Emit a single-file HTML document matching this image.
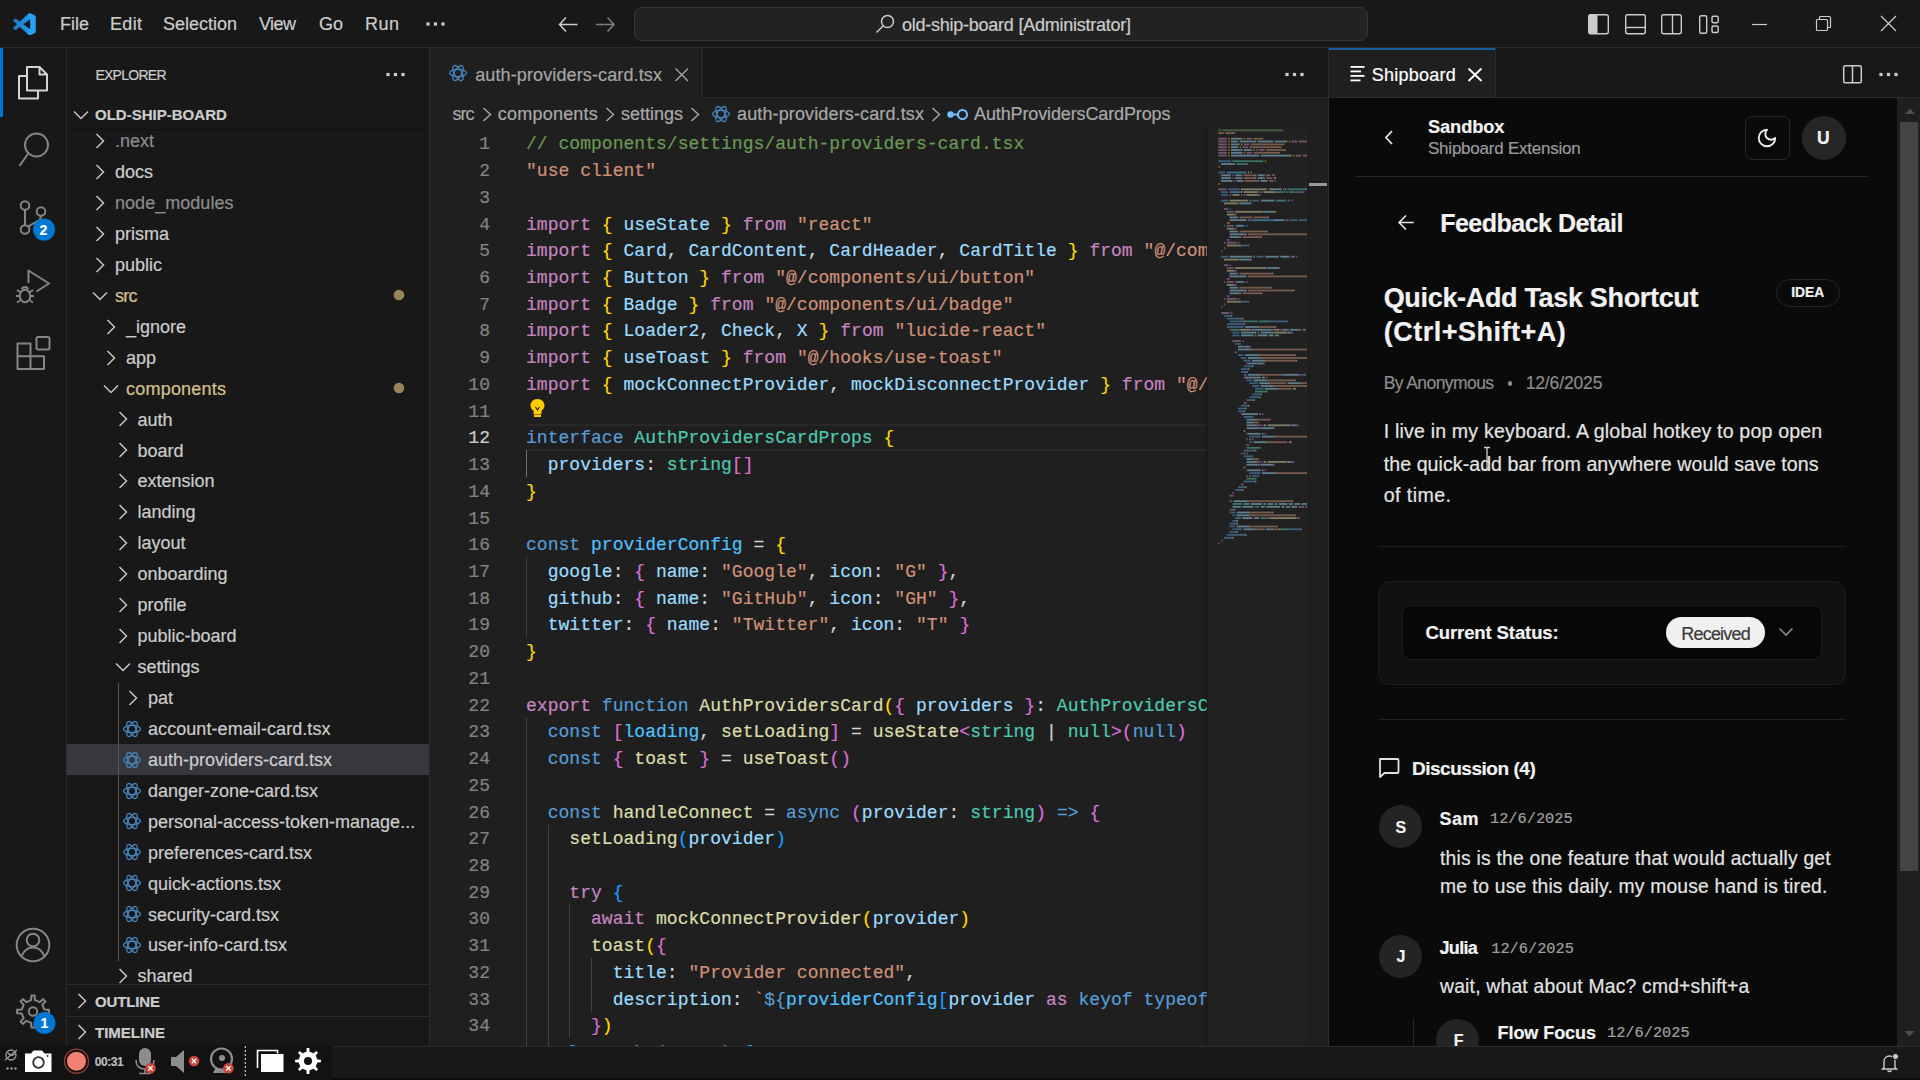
<!DOCTYPE html>
<html><head><meta charset="utf-8">
<style>
*{margin:0;padding:0;box-sizing:border-box}
html,body{width:1920px;height:1080px;overflow:hidden;background:#181818;font-family:"Liberation Sans",sans-serif;color:#cccccc;position:relative}
.a{position:absolute}
.t{position:absolute;white-space:pre;line-height:1;-webkit-text-stroke:0.2px currentColor}
</style></head><body>
<div class="a" style="left:0px;top:0px;width:1920px;height:48px;background:#181818;"></div>
<div class="a" style="left:0px;top:47px;width:1920px;height:1px;background:#2b2b2b;"></div>
<svg class="a" style="left:13px;top:12.5px" width="23" height="22.5" viewBox="0 0 24 24"><defs><linearGradient id="vg" x1="0" x2="1" y1="0" y2="0"><stop offset="0" stop-color="#1f78c6"/><stop offset="0.6" stop-color="#2090e0"/><stop offset="0.7" stop-color="#24a2f3"/></linearGradient></defs><path fill="url(#vg)" d="M23.15 2.587L18.21.21a1.494 1.494 0 0 0-1.705.29l-9.46 8.63-4.12-3.128a.999.999 0 0 0-1.276.057L.327 7.261A1 1 0 0 0 .326 8.74L3.899 12 .326 15.26a1 1 0 0 0 .001 1.479L1.65 17.94a.999.999 0 0 0 1.276.057l4.12-3.128 9.46 8.63a1.492 1.492 0 0 0 1.704.29l4.942-2.377A1.5 1.5 0 0 0 24 20.06V3.939a1.5 1.5 0 0 0-.85-1.352zm-5.146 14.861L10.826 12l7.178-5.448v10.896z"/></svg>
<div id="t1" class="t" style="left:60.00px;top:15.26px;font-size:18px;color:#cccccc;font-family:'Liberation Sans',sans-serif;letter-spacing:0.002px;">File</div>
<div id="t2" class="t" style="left:110.00px;top:15.26px;font-size:18px;color:#cccccc;font-family:'Liberation Sans',sans-serif;letter-spacing:0.328px;">Edit</div>
<div id="t3" class="t" style="left:163.00px;top:15.26px;font-size:18px;color:#cccccc;font-family:'Liberation Sans',sans-serif;letter-spacing:-0.005px;">Selection</div>
<div id="t4" class="t" style="left:259.00px;top:15.26px;font-size:18px;color:#cccccc;font-family:'Liberation Sans',sans-serif;letter-spacing:-0.563px;">View</div>
<div id="t5" class="t" style="left:319.00px;top:15.26px;font-size:18px;color:#cccccc;font-family:'Liberation Sans',sans-serif;letter-spacing:-0.001px;">Go</div>
<div id="t6" class="t" style="left:365.00px;top:15.26px;font-size:18px;color:#cccccc;font-family:'Liberation Sans',sans-serif;letter-spacing:0.495px;">Run</div>
<svg class="a" style="left:424px;top:20px" width="24" height="8"><rect x="2.4" y="2.4" width="3.2" height="3.2" fill="#ccc"/><rect x="9.9" y="2.4" width="3.2" height="3.2" fill="#ccc"/><rect x="17.4" y="2.4" width="3.2" height="3.2" fill="#ccc"/></svg>
<svg class="a" style="left:556px;top:14px" width="24" height="22" viewBox="0 0 24 22" fill="none" stroke="#cccccc" stroke-width="1.5"><path d="M3.5 10.5 H21.5 M10 3.5 L3.5 10.5 L10 17.5"/></svg>
<svg class="a" style="left:593px;top:14px" width="24" height="22" viewBox="0 0 24 22" fill="none" stroke="#7f7f7f" stroke-width="1.5"><path d="M3 10.5 H21 M14.5 3.5 L21 10.5 L14.5 17.5"/></svg>
<div class="a" style="left:634px;top:7px;width:734px;height:34px;border:1px solid #383838;border-radius:8px;background:#222222"></div>
<svg class="a" style="left:874px;top:13px" width="22" height="22" viewBox="0 0 22 22" fill="none" stroke="#cccccc" stroke-width="1.5"><circle cx="13.5" cy="8.5" r="6"/><path d="M9.2 12.8 L2.5 19.5"/></svg>
<div id="t7" class="t" style="left:902.00px;top:15.56px;font-size:18px;color:#cccccc;font-family:'Liberation Sans',sans-serif;letter-spacing:-0.245px;">old-ship-board [Administrator]</div>
<svg class="a" style="left:1586px;top:12px" width="140" height="24" viewBox="0 0 140 24" fill="none" stroke="#cccccc" stroke-width="1.4">
<rect x="2.7" y="2.7" width="19.6" height="19" rx="2"/><rect x="3" y="3" width="8.5" height="18.5" fill="#cccccc" stroke="none"/>
<rect x="39.7" y="2.7" width="19.6" height="19" rx="2"/><path d="M40 15.5 H59"/>
<rect x="75.7" y="2.7" width="19.6" height="19" rx="2"/><path d="M86.5 3 V21.5"/>
<rect x="113.7" y="3.7" width="7" height="17.5" rx="1.5"/><rect x="126" y="4.2" width="6.2" height="6.5" rx="1.5"/><rect x="126" y="14" width="6.2" height="6.5" rx="1.5"/>
</svg>
<svg class="a" style="left:1750px;top:14px" width="160" height="22" viewBox="0 0 160 22" fill="none" stroke="#cccccc" stroke-width="1.2">
<path d="M2 10.5 H17"/>
<rect x="66.5" y="5.5" width="11" height="11" rx="1"/><path d="M69.5 5.5 V3.5 Q69.5 2.5 70.5 2.5 H79.5 Q80.5 2.5 80.5 3.5 V12.5 Q80.5 13.5 79.5 13.5 H77.5"/>
<path d="M131 2 L146 17 M146 2 L131 17"/>
</svg>
<div class="a" style="left:0px;top:48px;width:66px;height:998px;background:#181818;"></div>
<div class="a" style="left:66px;top:48px;width:1px;height:998px;background:#2b2b2b;"></div>
<div class="a" style="left:0px;top:48px;width:2.5px;height:69px;background:#0078d4;"></div>
<svg class="a" style="left:0;top:48px" width="66" height="998" viewBox="0 48 66 998" fill="none" stroke-width="2" stroke-linejoin="round">
<g stroke="#d4d4d4">
<path d="M27 67 H39.5 L47 74.5 V90.5 H27 Z M39.5 67 V74.5 H47"/>
<path d="M27 76 H19 V98.5 H38 V90.5"/>
</g>
<g stroke="#858585">
<circle cx="36.5" cy="145" r="11.5"/><path d="M28.3 153.2 L19.5 166"/>
<circle cx="25" cy="205.5" r="4.3"/><circle cx="41" cy="211.5" r="4.3"/><circle cx="25" cy="229.5" r="4.3"/>
<path d="M25 209.8 V225.2 M41 215.8 C41 222 34 222 28.6 226.5"/>
<path d="M28.5 283 V270.5 L49 283.5 L36.5 291.5"/>
<ellipse cx="25" cy="296" rx="5.3" ry="6.3"/><path d="M17 290 L20 292 M33 290 L30 292 M16 296 H19.5 M34 296 H30.5 M17 302.5 L20 300.5 M33 302.5 L30 300.5 M21.5 289 Q25 285 28.5 289"/>
<path d="M17.5 343.5 H30.5 V369 H17.5 Z M17.5 356.2 H44 V369 H30.5"/>
<rect x="36.5" y="337" width="13" height="12.5" rx="1.5"/>
<circle cx="33" cy="945" r="16.3"/><circle cx="33" cy="940" r="6.3"/><path d="M21.5 956.5 C24 950 28 947.5 33 947.5 C38 947.5 42 950 44.5 956.5"/>
<path d="M44.34 1009.61 L48.92 1009.87 L48.92 1013.13 L44.34 1013.39 L42.36 1018.19 L45.41 1021.60 L43.10 1023.91 L39.69 1020.86 L34.89 1022.84 L34.63 1027.42 L31.37 1027.42 L31.11 1022.84 L26.31 1020.86 L22.90 1023.91 L20.59 1021.60 L23.64 1018.19 L21.66 1013.39 L17.08 1013.13 L17.08 1009.87 L21.66 1009.61 L23.64 1004.81 L20.59 1001.40 L22.90 999.09 L26.31 1002.14 L31.11 1000.16 L31.37 995.58 L34.63 995.58 L34.89 1000.16 L39.69 1002.14 L43.10 999.09 L45.41 1001.40 L42.36 1004.81 Z"/><circle cx="33" cy="1011.5" r="4.2"/>
</g>
<circle cx="44" cy="229.6" r="11" fill="#0078d4"/>
<circle cx="44.5" cy="1023" r="11" fill="#0078d4"/>
</svg>
<div id="t8" class="t" style="left:39.50px;top:222.95px;font-size:14px;color:#ffffff;font-weight:700;font-family:'Liberation Sans',sans-serif;">2</div>
<div id="t9" class="t" style="left:40.50px;top:1016.35px;font-size:14px;color:#ffffff;font-weight:700;font-family:'Liberation Sans',sans-serif;">1</div>
<div class="a" style="left:67px;top:48px;width:362px;height:998px;background:#181818;"></div>
<div class="a" style="left:429px;top:48px;width:1px;height:998px;background:#2b2b2b;"></div>
<div id="t10" class="t" style="left:95.40px;top:68.15px;font-size:14px;color:#cccccc;font-family:'Liberation Sans',sans-serif;letter-spacing:-0.734px;">EXPLORER</div>
<svg class="a" style="left:384px;top:70px" width="24" height="9"><rect x="2.4" y="2.9" width="3.2" height="3.2" fill="#ccc"/><rect x="9.9" y="2.9" width="3.2" height="3.2" fill="#ccc"/><rect x="17.4" y="2.9" width="3.2" height="3.2" fill="#ccc"/></svg>
<svg class="a" style="left:72.3px;top:105.5px" width="18" height="18" viewBox="0 0 18 18" fill="none" stroke="#c5c5c5" stroke-width="1.5"><path d="M2 5.5 L9 12.5 L16 5.5"/></svg>
<div id="t11" class="t" style="left:95.00px;top:106.50px;font-size:15px;color:#cccccc;font-weight:700;font-family:'Liberation Sans',sans-serif;letter-spacing:0.013px;">OLD-SHIP-BOARD</div>
<div class="a" style="left:67px;top:129px;width:362px;height:2px;background:linear-gradient(#0d0d0d,#181818);"></div>
<div class="a" style="left:67px;top:744px;width:362px;height:31px;background:#37373d;"></div>
<div class="a" style="left:118px;top:683px;width:1px;height:278px;background:#585858;"></div>
<div class="a" style="left:67px;top:131px;width:362px;height:853px;overflow:hidden">
<svg class="a" style="left:24px;top:1.0px" width="18" height="18" viewBox="0 0 18 18" fill="none" stroke="#c5c5c5" stroke-width="1.5"><path d="M5.5 2 L12.5 9 L5.5 16"/></svg>
<div id="t12" class="t" style="left:48.00px;top:1.26px;font-size:18px;color:#8c8c8c;font-family:'Liberation Sans',sans-serif;letter-spacing:-0.006px;">.next</div>
<svg class="a" style="left:24px;top:31.930000000000007px" width="18" height="18" viewBox="0 0 18 18" fill="none" stroke="#c5c5c5" stroke-width="1.5"><path d="M5.5 2 L12.5 9 L5.5 16"/></svg>
<div id="t13" class="t" style="left:48.00px;top:32.19px;font-size:18px;color:#cccccc;font-family:'Liberation Sans',sans-serif;">docs</div>
<svg class="a" style="left:24px;top:62.860000000000014px" width="18" height="18" viewBox="0 0 18 18" fill="none" stroke="#c5c5c5" stroke-width="1.5"><path d="M5.5 2 L12.5 9 L5.5 16"/></svg>
<div id="t14" class="t" style="left:48.00px;top:63.12px;font-size:18px;color:#8c8c8c;font-family:'Liberation Sans',sans-serif;letter-spacing:0.037px;">node_modules</div>
<svg class="a" style="left:24px;top:93.78999999999999px" width="18" height="18" viewBox="0 0 18 18" fill="none" stroke="#c5c5c5" stroke-width="1.5"><path d="M5.5 2 L12.5 9 L5.5 16"/></svg>
<div id="t15" class="t" style="left:48.00px;top:94.05px;font-size:18px;color:#cccccc;font-family:'Liberation Sans',sans-serif;">prisma</div>
<svg class="a" style="left:24px;top:124.72000000000003px" width="18" height="18" viewBox="0 0 18 18" fill="none" stroke="#c5c5c5" stroke-width="1.5"><path d="M5.5 2 L12.5 9 L5.5 16"/></svg>
<div id="t16" class="t" style="left:48.00px;top:124.98px;font-size:18px;color:#cccccc;font-family:'Liberation Sans',sans-serif;">public</div>
<svg class="a" style="left:24px;top:156.14999999999998px" width="18" height="18" viewBox="0 0 18 18" fill="none" stroke="#c5c5c5" stroke-width="1.5"><path d="M2 5.5 L9 12.5 L16 5.5"/></svg>
<div id="t17" class="t" style="left:48.00px;top:155.91px;font-size:18px;color:#d9c08c;font-family:'Liberation Sans',sans-serif;letter-spacing:-0.747px;">src</div>
<svg class="a" style="left:35px;top:186.57999999999998px" width="18" height="18" viewBox="0 0 18 18" fill="none" stroke="#c5c5c5" stroke-width="1.5"><path d="M5.5 2 L12.5 9 L5.5 16"/></svg>
<div id="t18" class="t" style="left:59.00px;top:186.84px;font-size:18px;color:#cccccc;font-family:'Liberation Sans',sans-serif;">_ignore</div>
<svg class="a" style="left:35px;top:217.51px" width="18" height="18" viewBox="0 0 18 18" fill="none" stroke="#c5c5c5" stroke-width="1.5"><path d="M5.5 2 L12.5 9 L5.5 16"/></svg>
<div id="t19" class="t" style="left:59.00px;top:217.77px;font-size:18px;color:#cccccc;font-family:'Liberation Sans',sans-serif;">app</div>
<svg class="a" style="left:35px;top:248.94px" width="18" height="18" viewBox="0 0 18 18" fill="none" stroke="#c5c5c5" stroke-width="1.5"><path d="M2 5.5 L9 12.5 L16 5.5"/></svg>
<div id="t20" class="t" style="left:59.00px;top:248.70px;font-size:18px;color:#d9c08c;font-family:'Liberation Sans',sans-serif;letter-spacing:0.216px;">components</div>
<svg class="a" style="left:46.5px;top:279.37px" width="18" height="18" viewBox="0 0 18 18" fill="none" stroke="#c5c5c5" stroke-width="1.5"><path d="M5.5 2 L12.5 9 L5.5 16"/></svg>
<div id="t21" class="t" style="left:70.50px;top:279.63px;font-size:18px;color:#cccccc;font-family:'Liberation Sans',sans-serif;">auth</div>
<svg class="a" style="left:46.5px;top:310.3px" width="18" height="18" viewBox="0 0 18 18" fill="none" stroke="#c5c5c5" stroke-width="1.5"><path d="M5.5 2 L12.5 9 L5.5 16"/></svg>
<div id="t22" class="t" style="left:70.50px;top:310.56px;font-size:18px;color:#cccccc;font-family:'Liberation Sans',sans-serif;">board</div>
<svg class="a" style="left:46.5px;top:341.23px" width="18" height="18" viewBox="0 0 18 18" fill="none" stroke="#c5c5c5" stroke-width="1.5"><path d="M5.5 2 L12.5 9 L5.5 16"/></svg>
<div id="t23" class="t" style="left:70.50px;top:341.49px;font-size:18px;color:#cccccc;font-family:'Liberation Sans',sans-serif;">extension</div>
<svg class="a" style="left:46.5px;top:372.15999999999997px" width="18" height="18" viewBox="0 0 18 18" fill="none" stroke="#c5c5c5" stroke-width="1.5"><path d="M5.5 2 L12.5 9 L5.5 16"/></svg>
<div id="t24" class="t" style="left:70.50px;top:372.42px;font-size:18px;color:#cccccc;font-family:'Liberation Sans',sans-serif;">landing</div>
<svg class="a" style="left:46.5px;top:403.0899999999999px" width="18" height="18" viewBox="0 0 18 18" fill="none" stroke="#c5c5c5" stroke-width="1.5"><path d="M5.5 2 L12.5 9 L5.5 16"/></svg>
<div id="t25" class="t" style="left:70.50px;top:403.35px;font-size:18px;color:#cccccc;font-family:'Liberation Sans',sans-serif;">layout</div>
<svg class="a" style="left:46.5px;top:434.02px" width="18" height="18" viewBox="0 0 18 18" fill="none" stroke="#c5c5c5" stroke-width="1.5"><path d="M5.5 2 L12.5 9 L5.5 16"/></svg>
<div id="t26" class="t" style="left:70.50px;top:434.28px;font-size:18px;color:#cccccc;font-family:'Liberation Sans',sans-serif;">onboarding</div>
<svg class="a" style="left:46.5px;top:464.95000000000005px" width="18" height="18" viewBox="0 0 18 18" fill="none" stroke="#c5c5c5" stroke-width="1.5"><path d="M5.5 2 L12.5 9 L5.5 16"/></svg>
<div id="t27" class="t" style="left:70.50px;top:465.21px;font-size:18px;color:#cccccc;font-family:'Liberation Sans',sans-serif;">profile</div>
<svg class="a" style="left:46.5px;top:495.88px" width="18" height="18" viewBox="0 0 18 18" fill="none" stroke="#c5c5c5" stroke-width="1.5"><path d="M5.5 2 L12.5 9 L5.5 16"/></svg>
<div id="t28" class="t" style="left:70.50px;top:496.14px;font-size:18px;color:#cccccc;font-family:'Liberation Sans',sans-serif;">public-board</div>
<svg class="a" style="left:46.5px;top:527.31px" width="18" height="18" viewBox="0 0 18 18" fill="none" stroke="#c5c5c5" stroke-width="1.5"><path d="M2 5.5 L9 12.5 L16 5.5"/></svg>
<div id="t29" class="t" style="left:70.50px;top:527.07px;font-size:18px;color:#cccccc;font-family:'Liberation Sans',sans-serif;">settings</div>
<svg class="a" style="left:57px;top:557.74px" width="18" height="18" viewBox="0 0 18 18" fill="none" stroke="#c5c5c5" stroke-width="1.5"><path d="M5.5 2 L12.5 9 L5.5 16"/></svg>
<div id="t30" class="t" style="left:81.00px;top:558.00px;font-size:18px;color:#cccccc;font-family:'Liberation Sans',sans-serif;">pat</div>
<svg class="a" style="left:55px;top:587.67px" width="20" height="20" viewBox="-10 -10 20 20" fill="none" stroke="#4383ba" stroke-width="1.3"><g transform="scale(1.0)"><ellipse rx="8.4" ry="3.7"/><ellipse rx="8.4" ry="3.7" transform="rotate(60)"/><ellipse rx="8.4" ry="3.7" transform="rotate(120)"/></g></svg>
<div id="t31" class="t" style="left:81.00px;top:588.93px;font-size:18px;color:#cccccc;font-family:'Liberation Sans',sans-serif;letter-spacing:0.068px;">account-email-card.tsx</div>
<svg class="a" style="left:55px;top:618.6px" width="20" height="20" viewBox="-10 -10 20 20" fill="none" stroke="#4383ba" stroke-width="1.3"><g transform="scale(1.0)"><ellipse rx="8.4" ry="3.7"/><ellipse rx="8.4" ry="3.7" transform="rotate(60)"/><ellipse rx="8.4" ry="3.7" transform="rotate(120)"/></g></svg>
<div id="t32" class="t" style="left:81.00px;top:619.86px;font-size:18px;color:#cccccc;font-family:'Liberation Sans',sans-serif;">auth-providers-card.tsx</div>
<svg class="a" style="left:55px;top:649.53px" width="20" height="20" viewBox="-10 -10 20 20" fill="none" stroke="#4383ba" stroke-width="1.3"><g transform="scale(1.0)"><ellipse rx="8.4" ry="3.7"/><ellipse rx="8.4" ry="3.7" transform="rotate(60)"/><ellipse rx="8.4" ry="3.7" transform="rotate(120)"/></g></svg>
<div id="t33" class="t" style="left:81.00px;top:650.79px;font-size:18px;color:#cccccc;font-family:'Liberation Sans',sans-serif;">danger-zone-card.tsx</div>
<svg class="a" style="left:55px;top:680.46px" width="20" height="20" viewBox="-10 -10 20 20" fill="none" stroke="#4383ba" stroke-width="1.3"><g transform="scale(1.0)"><ellipse rx="8.4" ry="3.7"/><ellipse rx="8.4" ry="3.7" transform="rotate(60)"/><ellipse rx="8.4" ry="3.7" transform="rotate(120)"/></g></svg>
<div id="t34" class="t" style="left:81.00px;top:681.72px;font-size:18px;color:#cccccc;font-family:'Liberation Sans',sans-serif;">personal-access-token-manage...</div>
<svg class="a" style="left:55px;top:711.39px" width="20" height="20" viewBox="-10 -10 20 20" fill="none" stroke="#4383ba" stroke-width="1.3"><g transform="scale(1.0)"><ellipse rx="8.4" ry="3.7"/><ellipse rx="8.4" ry="3.7" transform="rotate(60)"/><ellipse rx="8.4" ry="3.7" transform="rotate(120)"/></g></svg>
<div id="t35" class="t" style="left:81.00px;top:712.65px;font-size:18px;color:#cccccc;font-family:'Liberation Sans',sans-serif;">preferences-card.tsx</div>
<svg class="a" style="left:55px;top:742.3199999999999px" width="20" height="20" viewBox="-10 -10 20 20" fill="none" stroke="#4383ba" stroke-width="1.3"><g transform="scale(1.0)"><ellipse rx="8.4" ry="3.7"/><ellipse rx="8.4" ry="3.7" transform="rotate(60)"/><ellipse rx="8.4" ry="3.7" transform="rotate(120)"/></g></svg>
<div id="t36" class="t" style="left:81.00px;top:743.58px;font-size:18px;color:#cccccc;font-family:'Liberation Sans',sans-serif;">quick-actions.tsx</div>
<svg class="a" style="left:55px;top:773.25px" width="20" height="20" viewBox="-10 -10 20 20" fill="none" stroke="#4383ba" stroke-width="1.3"><g transform="scale(1.0)"><ellipse rx="8.4" ry="3.7"/><ellipse rx="8.4" ry="3.7" transform="rotate(60)"/><ellipse rx="8.4" ry="3.7" transform="rotate(120)"/></g></svg>
<div id="t37" class="t" style="left:81.00px;top:774.51px;font-size:18px;color:#cccccc;font-family:'Liberation Sans',sans-serif;">security-card.tsx</div>
<svg class="a" style="left:55px;top:804.18px" width="20" height="20" viewBox="-10 -10 20 20" fill="none" stroke="#4383ba" stroke-width="1.3"><g transform="scale(1.0)"><ellipse rx="8.4" ry="3.7"/><ellipse rx="8.4" ry="3.7" transform="rotate(60)"/><ellipse rx="8.4" ry="3.7" transform="rotate(120)"/></g></svg>
<div id="t38" class="t" style="left:81.00px;top:805.44px;font-size:18px;color:#cccccc;font-family:'Liberation Sans',sans-serif;">user-info-card.tsx</div>
<svg class="a" style="left:46.5px;top:836.11px" width="18" height="18" viewBox="0 0 18 18" fill="none" stroke="#c5c5c5" stroke-width="1.5"><path d="M5.5 2 L12.5 9 L5.5 16"/></svg>
<div id="t39" class="t" style="left:70.50px;top:836.37px;font-size:18px;color:#cccccc;font-family:'Liberation Sans',sans-serif;">shared</div>
</div>
<svg class="a" style="left:390px;top:285px" width="20" height="115"><circle cx="9" cy="10" r="5.3" fill="#968559"/><circle cx="9" cy="103" r="5.3" fill="#968559"/></svg>
<div class="a" style="left:67px;top:984px;width:362px;height:1px;background:#2b2b2b;"></div>
<svg class="a" style="left:72.5px;top:992px" width="18" height="18" viewBox="0 0 18 18" fill="none" stroke="#c5c5c5" stroke-width="1.5"><path d="M5.5 2 L12.5 9 L5.5 16"/></svg>
<div id="t40" class="t" style="left:95.00px;top:994.10px;font-size:15px;color:#cccccc;font-weight:700;font-family:'Liberation Sans',sans-serif;letter-spacing:-0.138px;">OUTLINE</div>
<div class="a" style="left:67px;top:1016px;width:362px;height:1px;background:#2b2b2b;"></div>
<svg class="a" style="left:72.5px;top:1023px" width="18" height="18" viewBox="0 0 18 18" fill="none" stroke="#c5c5c5" stroke-width="1.5"><path d="M5.5 2 L12.5 9 L5.5 16"/></svg>
<div id="t41" class="t" style="left:95.00px;top:1024.90px;font-size:15px;color:#cccccc;font-weight:700;font-family:'Liberation Sans',sans-serif;letter-spacing:0.001px;">TIMELINE</div>
<div class="a" style="left:430px;top:98px;width:898px;height:948px;background:#1f1f1f;"></div>
<div class="a" style="left:430px;top:48px;width:898px;height:50px;background:#181818;"></div>
<div class="a" style="left:430px;top:97px;width:898px;height:1px;background:#2b2b2b;"></div>
<div class="a" style="left:430px;top:48px;width:272px;height:50px;background:#1f1f1f;"></div>
<div class="a" style="left:702px;top:48px;width:1px;height:49px;background:#2b2b2b;"></div>
<svg class="a" style="left:447.8px;top:62.8px" width="20" height="20" viewBox="-10 -10 20 20" fill="none" stroke="#4383ba" stroke-width="1.3"><ellipse rx="8.4" ry="3.7"/><ellipse rx="8.4" ry="3.7" transform="rotate(60)"/><ellipse rx="8.4" ry="3.7" transform="rotate(120)"/></svg>
<div id="t42" class="t" style="left:475.20px;top:65.56px;font-size:18px;color:#a6a6a6;font-family:'Liberation Sans',sans-serif;letter-spacing:0.120px;">auth-providers-card.tsx</div>
<svg class="a" style="left:672px;top:65px" width="20" height="20" viewBox="0 0 20 20" fill="none" stroke="#a6a6a6" stroke-width="1.4"><path d="M3.5 3.5 L16 16 M16 3.5 L3.5 16"/></svg>
<svg class="a" style="left:1283px;top:70px" width="24" height="9"><rect x="2.4" y="2.9" width="3.2" height="3.2" fill="#ccc"/><rect x="9.9" y="2.9" width="3.2" height="3.2" fill="#ccc"/><rect x="17.4" y="2.9" width="3.2" height="3.2" fill="#ccc"/></svg>
<div id="t43" class="t" style="left:452.60px;top:104.96px;font-size:18px;color:#a9a9a9;font-family:'Liberation Sans',sans-serif;letter-spacing:-0.997px;">src</div>
<svg class="a" style="left:480.5px;top:104px" width="13" height="20" viewBox="0 0 13 20" fill="none" stroke="#a9a9a9" stroke-width="1.4"><path d="M2.5 4 L9.5 10.5 L2.5 17"/></svg>
<div id="t44" class="t" style="left:497.80px;top:104.96px;font-size:18px;color:#a9a9a9;font-family:'Liberation Sans',sans-serif;letter-spacing:0.216px;">components</div>
<svg class="a" style="left:604px;top:104px" width="13" height="20" viewBox="0 0 13 20" fill="none" stroke="#a9a9a9" stroke-width="1.4"><path d="M2.5 4 L9.5 10.5 L2.5 17"/></svg>
<div id="t45" class="t" style="left:621.00px;top:104.96px;font-size:18px;color:#a9a9a9;font-family:'Liberation Sans',sans-serif;letter-spacing:-0.005px;">settings</div>
<svg class="a" style="left:689px;top:104px" width="13" height="20" viewBox="0 0 13 20" fill="none" stroke="#a9a9a9" stroke-width="1.4"><path d="M2.5 4 L9.5 10.5 L2.5 17"/></svg>
<svg class="a" style="left:710.5px;top:103.5px" width="20" height="20" viewBox="-10 -10 20 20" fill="none" stroke="#4383ba" stroke-width="1.3"><ellipse rx="8.4" ry="3.7"/><ellipse rx="8.4" ry="3.7" transform="rotate(60)"/><ellipse rx="8.4" ry="3.7" transform="rotate(120)"/></svg>
<div id="t46" class="t" style="left:737.00px;top:104.96px;font-size:18px;color:#a9a9a9;font-family:'Liberation Sans',sans-serif;letter-spacing:0.133px;">auth-providers-card.tsx</div>
<svg class="a" style="left:930px;top:104px" width="13" height="20" viewBox="0 0 13 20" fill="none" stroke="#a9a9a9" stroke-width="1.4"><path d="M2.5 4 L9.5 10.5 L2.5 17"/></svg>
<svg class="a" style="left:946px;top:104px" width="24" height="20" viewBox="0 0 24 20" fill="none" stroke="#75beff" stroke-width="2"><circle cx="4.5" cy="10.5" r="2.2" fill="#75beff"/><path d="M6 10.5 H12"/><circle cx="16.5" cy="10.5" r="4.5"/></svg>
<div id="t47" class="t" style="left:974.00px;top:104.96px;font-size:18px;color:#a9a9a9;font-family:'Liberation Sans',sans-serif;letter-spacing:-0.123px;">AuthProvidersCardProps</div>
<div class="a" style="left:526px;top:424px;width:681px;height:1.5px;background:#282828;"></div>
<div class="a" style="left:526px;top:449px;width:681px;height:1.5px;background:#282828;"></div>
<div class="a" style="left:526.0px;top:450.4px;width:1px;height:26.7px;background:#707070;"></div>
<div class="a" style="left:526.0px;top:557.3px;width:1px;height:80.2px;background:#404040;"></div>
<div class="a" style="left:526.0px;top:717.7px;width:1px;height:347.5px;background:#404040;"></div>
<div class="a" style="left:547.7px;top:824.6px;width:1px;height:240.5px;background:#404040;"></div>
<div class="a" style="left:569.3px;top:904.8px;width:1px;height:133.6px;background:#404040;"></div>
<div class="a" style="left:591.0px;top:958.2px;width:1px;height:53.4px;background:#404040;"></div>
<div class="a" style="left:430px;top:129px;width:777px;height:917px;overflow:hidden">
<div id="t48" class="t" style="left:49.17px;top:6.31px;font-size:18px;color:#838383;font-family:'Liberation Mono',monospace;letter-spacing:0.03px;">1</div>
<div id="t49" class="t" style="left:49.17px;top:33.04px;font-size:18px;color:#838383;font-family:'Liberation Mono',monospace;letter-spacing:0.03px;">2</div>
<div id="t50" class="t" style="left:49.17px;top:59.77px;font-size:18px;color:#838383;font-family:'Liberation Mono',monospace;letter-spacing:0.03px;">3</div>
<div id="t51" class="t" style="left:49.17px;top:86.50px;font-size:18px;color:#838383;font-family:'Liberation Mono',monospace;letter-spacing:0.03px;">4</div>
<div id="t52" class="t" style="left:49.17px;top:113.23px;font-size:18px;color:#838383;font-family:'Liberation Mono',monospace;letter-spacing:0.03px;">5</div>
<div id="t53" class="t" style="left:49.17px;top:139.96px;font-size:18px;color:#838383;font-family:'Liberation Mono',monospace;letter-spacing:0.03px;">6</div>
<div id="t54" class="t" style="left:49.17px;top:166.69px;font-size:18px;color:#838383;font-family:'Liberation Mono',monospace;letter-spacing:0.03px;">7</div>
<div id="t55" class="t" style="left:49.17px;top:193.42px;font-size:18px;color:#838383;font-family:'Liberation Mono',monospace;letter-spacing:0.03px;">8</div>
<div id="t56" class="t" style="left:49.17px;top:220.15px;font-size:18px;color:#838383;font-family:'Liberation Mono',monospace;letter-spacing:0.03px;">9</div>
<div id="t57" class="t" style="left:38.34px;top:246.88px;font-size:18px;color:#838383;font-family:'Liberation Mono',monospace;letter-spacing:0.03px;">10</div>
<div id="t58" class="t" style="left:38.34px;top:273.61px;font-size:18px;color:#838383;font-family:'Liberation Mono',monospace;letter-spacing:0.03px;">11</div>
<div id="t59" class="t" style="left:38.34px;top:300.34px;font-size:18px;color:#cccccc;font-family:'Liberation Mono',monospace;letter-spacing:0.03px;">12</div>
<div id="t60" class="t" style="left:38.34px;top:327.07px;font-size:18px;color:#838383;font-family:'Liberation Mono',monospace;letter-spacing:0.03px;">13</div>
<div id="t61" class="t" style="left:38.34px;top:353.80px;font-size:18px;color:#838383;font-family:'Liberation Mono',monospace;letter-spacing:0.03px;">14</div>
<div id="t62" class="t" style="left:38.34px;top:380.53px;font-size:18px;color:#838383;font-family:'Liberation Mono',monospace;letter-spacing:0.03px;">15</div>
<div id="t63" class="t" style="left:38.34px;top:407.26px;font-size:18px;color:#838383;font-family:'Liberation Mono',monospace;letter-spacing:0.03px;">16</div>
<div id="t64" class="t" style="left:38.34px;top:433.99px;font-size:18px;color:#838383;font-family:'Liberation Mono',monospace;letter-spacing:0.03px;">17</div>
<div id="t65" class="t" style="left:38.34px;top:460.72px;font-size:18px;color:#838383;font-family:'Liberation Mono',monospace;letter-spacing:0.03px;">18</div>
<div id="t66" class="t" style="left:38.34px;top:487.45px;font-size:18px;color:#838383;font-family:'Liberation Mono',monospace;letter-spacing:0.03px;">19</div>
<div id="t67" class="t" style="left:38.34px;top:514.18px;font-size:18px;color:#838383;font-family:'Liberation Mono',monospace;letter-spacing:0.03px;">20</div>
<div id="t68" class="t" style="left:38.34px;top:540.91px;font-size:18px;color:#838383;font-family:'Liberation Mono',monospace;letter-spacing:0.03px;">21</div>
<div id="t69" class="t" style="left:38.34px;top:567.64px;font-size:18px;color:#838383;font-family:'Liberation Mono',monospace;letter-spacing:0.03px;">22</div>
<div id="t70" class="t" style="left:38.34px;top:594.37px;font-size:18px;color:#838383;font-family:'Liberation Mono',monospace;letter-spacing:0.03px;">23</div>
<div id="t71" class="t" style="left:38.34px;top:621.10px;font-size:18px;color:#838383;font-family:'Liberation Mono',monospace;letter-spacing:0.03px;">24</div>
<div id="t72" class="t" style="left:38.34px;top:647.83px;font-size:18px;color:#838383;font-family:'Liberation Mono',monospace;letter-spacing:0.03px;">25</div>
<div id="t73" class="t" style="left:38.34px;top:674.56px;font-size:18px;color:#838383;font-family:'Liberation Mono',monospace;letter-spacing:0.03px;">26</div>
<div id="t74" class="t" style="left:38.34px;top:701.29px;font-size:18px;color:#838383;font-family:'Liberation Mono',monospace;letter-spacing:0.03px;">27</div>
<div id="t75" class="t" style="left:38.34px;top:728.02px;font-size:18px;color:#838383;font-family:'Liberation Mono',monospace;letter-spacing:0.03px;">28</div>
<div id="t76" class="t" style="left:38.34px;top:754.75px;font-size:18px;color:#838383;font-family:'Liberation Mono',monospace;letter-spacing:0.03px;">29</div>
<div id="t77" class="t" style="left:38.34px;top:781.48px;font-size:18px;color:#838383;font-family:'Liberation Mono',monospace;letter-spacing:0.03px;">30</div>
<div id="t78" class="t" style="left:38.34px;top:808.21px;font-size:18px;color:#838383;font-family:'Liberation Mono',monospace;letter-spacing:0.03px;">31</div>
<div id="t79" class="t" style="left:38.34px;top:834.94px;font-size:18px;color:#838383;font-family:'Liberation Mono',monospace;letter-spacing:0.03px;">32</div>
<div id="t80" class="t" style="left:38.34px;top:861.67px;font-size:18px;color:#838383;font-family:'Liberation Mono',monospace;letter-spacing:0.03px;">33</div>
<div id="t81" class="t" style="left:38.34px;top:888.40px;font-size:18px;color:#838383;font-family:'Liberation Mono',monospace;letter-spacing:0.03px;">34</div>
<div id="t82" class="t" style="left:38.34px;top:915.13px;font-size:18px;color:#838383;font-family:'Liberation Mono',monospace;letter-spacing:0.03px;">35</div>
<div id="t83" class="t" style="left:96.00px;top:6.31px;font-size:18px;color:#d4d4d4;font-family:'Liberation Mono',monospace;letter-spacing:0.03px;"><span style="color:#6a9955">// components/settings/auth-providers-card.tsx</span></div>
<div id="t84" class="t" style="left:96.00px;top:33.04px;font-size:18px;color:#d4d4d4;font-family:'Liberation Mono',monospace;letter-spacing:0.03px;"><span style="color:#ce9178">"use client"</span></div>
<div id="t85" class="t" style="left:96.00px;top:86.50px;font-size:18px;color:#d4d4d4;font-family:'Liberation Mono',monospace;letter-spacing:0.03px;"><span style="color:#c586c0">import</span><span style="color:#d4d4d4"> </span><span style="color:#ffd700">{</span><span style="color:#9cdcfe"> useState </span><span style="color:#ffd700">}</span><span style="color:#d4d4d4"> </span><span style="color:#c586c0">from</span><span style="color:#d4d4d4"> </span><span style="color:#ce9178">"react"</span></div>
<div id="t86" class="t" style="left:96.00px;top:113.23px;font-size:18px;color:#d4d4d4;font-family:'Liberation Mono',monospace;letter-spacing:0.03px;"><span style="color:#c586c0">import</span><span style="color:#d4d4d4"> </span><span style="color:#ffd700">{</span><span style="color:#9cdcfe"> Card</span><span style="color:#d4d4d4">, </span><span style="color:#9cdcfe">CardContent</span><span style="color:#d4d4d4">, </span><span style="color:#9cdcfe">CardHeader</span><span style="color:#d4d4d4">, </span><span style="color:#9cdcfe">CardTitle </span><span style="color:#ffd700">}</span><span style="color:#d4d4d4"> </span><span style="color:#c586c0">from</span><span style="color:#d4d4d4"> </span><span style="color:#ce9178">"@/components/ui/card"</span></div>
<div id="t87" class="t" style="left:96.00px;top:139.96px;font-size:18px;color:#d4d4d4;font-family:'Liberation Mono',monospace;letter-spacing:0.03px;"><span style="color:#c586c0">import</span><span style="color:#d4d4d4"> </span><span style="color:#ffd700">{</span><span style="color:#9cdcfe"> Button </span><span style="color:#ffd700">}</span><span style="color:#d4d4d4"> </span><span style="color:#c586c0">from</span><span style="color:#d4d4d4"> </span><span style="color:#ce9178">"@/components/ui/button"</span></div>
<div id="t88" class="t" style="left:96.00px;top:166.69px;font-size:18px;color:#d4d4d4;font-family:'Liberation Mono',monospace;letter-spacing:0.03px;"><span style="color:#c586c0">import</span><span style="color:#d4d4d4"> </span><span style="color:#ffd700">{</span><span style="color:#9cdcfe"> Badge </span><span style="color:#ffd700">}</span><span style="color:#d4d4d4"> </span><span style="color:#c586c0">from</span><span style="color:#d4d4d4"> </span><span style="color:#ce9178">"@/components/ui/badge"</span></div>
<div id="t89" class="t" style="left:96.00px;top:193.42px;font-size:18px;color:#d4d4d4;font-family:'Liberation Mono',monospace;letter-spacing:0.03px;"><span style="color:#c586c0">import</span><span style="color:#d4d4d4"> </span><span style="color:#ffd700">{</span><span style="color:#9cdcfe"> Loader2</span><span style="color:#d4d4d4">, </span><span style="color:#9cdcfe">Check</span><span style="color:#d4d4d4">, </span><span style="color:#9cdcfe">X </span><span style="color:#ffd700">}</span><span style="color:#d4d4d4"> </span><span style="color:#c586c0">from</span><span style="color:#d4d4d4"> </span><span style="color:#ce9178">"lucide-react"</span></div>
<div id="t90" class="t" style="left:96.00px;top:220.15px;font-size:18px;color:#d4d4d4;font-family:'Liberation Mono',monospace;letter-spacing:0.03px;"><span style="color:#c586c0">import</span><span style="color:#d4d4d4"> </span><span style="color:#ffd700">{</span><span style="color:#9cdcfe"> useToast </span><span style="color:#ffd700">}</span><span style="color:#d4d4d4"> </span><span style="color:#c586c0">from</span><span style="color:#d4d4d4"> </span><span style="color:#ce9178">"@/hooks/use-toast"</span></div>
<div id="t91" class="t" style="left:96.00px;top:246.88px;font-size:18px;color:#d4d4d4;font-family:'Liberation Mono',monospace;letter-spacing:0.03px;"><span style="color:#c586c0">import</span><span style="color:#d4d4d4"> </span><span style="color:#ffd700">{</span><span style="color:#9cdcfe"> mockConnectProvider</span><span style="color:#d4d4d4">, </span><span style="color:#9cdcfe">mockDisconnectProvider </span><span style="color:#ffd700">}</span><span style="color:#d4d4d4"> </span><span style="color:#c586c0">from</span><span style="color:#d4d4d4"> </span><span style="color:#ce9178">"@/lib/mock-auth"</span></div>
<div id="t92" class="t" style="left:96.00px;top:300.34px;font-size:18px;color:#d4d4d4;font-family:'Liberation Mono',monospace;letter-spacing:0.03px;"><span style="color:#569cd6">interface</span><span style="color:#d4d4d4"> </span><span style="color:#4ec9b0">AuthProvidersCardProps</span><span style="color:#d4d4d4"> </span><span style="color:#ffd700">{</span></div>
<div id="t93" class="t" style="left:96.00px;top:327.07px;font-size:18px;color:#d4d4d4;font-family:'Liberation Mono',monospace;letter-spacing:0.03px;"><span style="color:#9cdcfe">  providers</span><span style="color:#d4d4d4">: </span><span style="color:#4ec9b0">string</span><span style="color:#da70d6">[]</span></div>
<div id="t94" class="t" style="left:96.00px;top:353.80px;font-size:18px;color:#d4d4d4;font-family:'Liberation Mono',monospace;letter-spacing:0.03px;"><span style="color:#ffd700">}</span></div>
<div id="t95" class="t" style="left:96.00px;top:407.26px;font-size:18px;color:#d4d4d4;font-family:'Liberation Mono',monospace;letter-spacing:0.03px;"><span style="color:#569cd6">const</span><span style="color:#d4d4d4"> </span><span style="color:#4fc1ff">providerConfig</span><span style="color:#d4d4d4"> = </span><span style="color:#ffd700">{</span></div>
<div id="t96" class="t" style="left:96.00px;top:433.99px;font-size:18px;color:#d4d4d4;font-family:'Liberation Mono',monospace;letter-spacing:0.03px;"><span style="color:#9cdcfe">  google</span><span style="color:#d4d4d4">: </span><span style="color:#da70d6">{</span><span style="color:#9cdcfe"> name</span><span style="color:#d4d4d4">: </span><span style="color:#ce9178">"Google"</span><span style="color:#d4d4d4">, </span><span style="color:#9cdcfe">icon</span><span style="color:#d4d4d4">: </span><span style="color:#ce9178">"G"</span><span style="color:#d4d4d4"> </span><span style="color:#da70d6">}</span><span style="color:#d4d4d4">,</span></div>
<div id="t97" class="t" style="left:96.00px;top:460.72px;font-size:18px;color:#d4d4d4;font-family:'Liberation Mono',monospace;letter-spacing:0.03px;"><span style="color:#9cdcfe">  github</span><span style="color:#d4d4d4">: </span><span style="color:#da70d6">{</span><span style="color:#9cdcfe"> name</span><span style="color:#d4d4d4">: </span><span style="color:#ce9178">"GitHub"</span><span style="color:#d4d4d4">, </span><span style="color:#9cdcfe">icon</span><span style="color:#d4d4d4">: </span><span style="color:#ce9178">"GH"</span><span style="color:#d4d4d4"> </span><span style="color:#da70d6">}</span><span style="color:#d4d4d4">,</span></div>
<div id="t98" class="t" style="left:96.00px;top:487.45px;font-size:18px;color:#d4d4d4;font-family:'Liberation Mono',monospace;letter-spacing:0.03px;"><span style="color:#9cdcfe">  twitter</span><span style="color:#d4d4d4">: </span><span style="color:#da70d6">{</span><span style="color:#9cdcfe"> name</span><span style="color:#d4d4d4">: </span><span style="color:#ce9178">"Twitter"</span><span style="color:#d4d4d4">, </span><span style="color:#9cdcfe">icon</span><span style="color:#d4d4d4">: </span><span style="color:#ce9178">"T"</span><span style="color:#d4d4d4"> </span><span style="color:#da70d6">}</span></div>
<div id="t99" class="t" style="left:96.00px;top:514.18px;font-size:18px;color:#d4d4d4;font-family:'Liberation Mono',monospace;letter-spacing:0.03px;"><span style="color:#ffd700">}</span></div>
<div id="t100" class="t" style="left:96.00px;top:567.64px;font-size:18px;color:#d4d4d4;font-family:'Liberation Mono',monospace;letter-spacing:0.03px;"><span style="color:#c586c0">export</span><span style="color:#d4d4d4"> </span><span style="color:#569cd6">function</span><span style="color:#d4d4d4"> </span><span style="color:#dcdcaa">AuthProvidersCard</span><span style="color:#ffd700">(</span><span style="color:#da70d6">{</span><span style="color:#9cdcfe"> providers </span><span style="color:#da70d6">}</span><span style="color:#d4d4d4">: </span><span style="color:#4ec9b0">AuthProvidersCardProps</span><span style="color:#ffd700">)</span><span style="color:#d4d4d4"> </span><span style="color:#ffd700">{</span></div>
<div id="t101" class="t" style="left:96.00px;top:594.37px;font-size:18px;color:#d4d4d4;font-family:'Liberation Mono',monospace;letter-spacing:0.03px;"><span style="color:#569cd6">  const</span><span style="color:#d4d4d4"> </span><span style="color:#da70d6">[</span><span style="color:#4fc1ff">loading</span><span style="color:#d4d4d4">, </span><span style="color:#dcdcaa">setLoading</span><span style="color:#da70d6">]</span><span style="color:#d4d4d4"> = </span><span style="color:#dcdcaa">useState</span><span style="color:#da70d6">&lt;</span><span style="color:#4ec9b0">string</span><span style="color:#d4d4d4"> | </span><span style="color:#4ec9b0">null</span><span style="color:#da70d6">&gt;</span><span style="color:#da70d6">(</span><span style="color:#569cd6">null</span><span style="color:#da70d6">)</span></div>
<div id="t102" class="t" style="left:96.00px;top:621.10px;font-size:18px;color:#d4d4d4;font-family:'Liberation Mono',monospace;letter-spacing:0.03px;"><span style="color:#569cd6">  const</span><span style="color:#d4d4d4"> </span><span style="color:#da70d6">{</span><span style="color:#dcdcaa"> toast </span><span style="color:#da70d6">}</span><span style="color:#d4d4d4"> = </span><span style="color:#dcdcaa">useToast</span><span style="color:#da70d6">()</span></div>
<div id="t103" class="t" style="left:96.00px;top:674.56px;font-size:18px;color:#d4d4d4;font-family:'Liberation Mono',monospace;letter-spacing:0.03px;"><span style="color:#569cd6">  const</span><span style="color:#d4d4d4"> </span><span style="color:#dcdcaa">handleConnect</span><span style="color:#d4d4d4"> = </span><span style="color:#569cd6">async</span><span style="color:#d4d4d4"> </span><span style="color:#da70d6">(</span><span style="color:#9cdcfe">provider</span><span style="color:#d4d4d4">: </span><span style="color:#4ec9b0">string</span><span style="color:#da70d6">)</span><span style="color:#d4d4d4"> </span><span style="color:#569cd6">=&gt;</span><span style="color:#d4d4d4"> </span><span style="color:#da70d6">{</span></div>
<div id="t104" class="t" style="left:96.00px;top:701.29px;font-size:18px;color:#d4d4d4;font-family:'Liberation Mono',monospace;letter-spacing:0.03px;"><span style="color:#dcdcaa">    setLoading</span><span style="color:#179fff">(</span><span style="color:#9cdcfe">provider</span><span style="color:#179fff">)</span></div>
<div id="t105" class="t" style="left:96.00px;top:754.75px;font-size:18px;color:#d4d4d4;font-family:'Liberation Mono',monospace;letter-spacing:0.03px;"><span style="color:#c586c0">    try</span><span style="color:#d4d4d4"> </span><span style="color:#179fff">{</span></div>
<div id="t106" class="t" style="left:96.00px;top:781.48px;font-size:18px;color:#d4d4d4;font-family:'Liberation Mono',monospace;letter-spacing:0.03px;"><span style="color:#c586c0">      await</span><span style="color:#d4d4d4"> </span><span style="color:#dcdcaa">mockConnectProvider</span><span style="color:#ffd700">(</span><span style="color:#9cdcfe">provider</span><span style="color:#ffd700">)</span></div>
<div id="t107" class="t" style="left:96.00px;top:808.21px;font-size:18px;color:#d4d4d4;font-family:'Liberation Mono',monospace;letter-spacing:0.03px;"><span style="color:#dcdcaa">      toast</span><span style="color:#ffd700">(</span><span style="color:#da70d6">{</span></div>
<div id="t108" class="t" style="left:96.00px;top:834.94px;font-size:18px;color:#d4d4d4;font-family:'Liberation Mono',monospace;letter-spacing:0.03px;"><span style="color:#9cdcfe">        title</span><span style="color:#d4d4d4">: </span><span style="color:#ce9178">"Provider connected"</span><span style="color:#d4d4d4">,</span></div>
<div id="t109" class="t" style="left:96.00px;top:861.67px;font-size:18px;color:#d4d4d4;font-family:'Liberation Mono',monospace;letter-spacing:0.03px;"><span style="color:#9cdcfe">        description</span><span style="color:#d4d4d4">: </span><span style="color:#ce9178">`</span><span style="color:#569cd6">${</span><span style="color:#4fc1ff">providerConfig</span><span style="color:#179fff">[</span><span style="color:#9cdcfe">provider</span><span style="color:#d4d4d4"> </span><span style="color:#c586c0">as</span><span style="color:#d4d4d4"> </span><span style="color:#569cd6">keyof</span><span style="color:#d4d4d4"> </span><span style="color:#569cd6">typeof</span><span style="color:#4fc1ff"> providerConfig</span><span style="color:#179fff">]</span><span style="color:#9cdcfe">.name</span></div>
<div id="t110" class="t" style="left:96.00px;top:888.40px;font-size:18px;color:#d4d4d4;font-family:'Liberation Mono',monospace;letter-spacing:0.03px;"><span style="color:#d4d4d4">      </span><span style="color:#da70d6">}</span><span style="color:#ffd700">)</span></div>
<div id="t111" class="t" style="left:96.00px;top:915.13px;font-size:18px;color:#d4d4d4;font-family:'Liberation Mono',monospace;letter-spacing:0.03px;"><span style="color:#d4d4d4">    </span><span style="color:#179fff">}</span><span style="color:#d4d4d4"> </span><span style="color:#c586c0">catch</span><span style="color:#d4d4d4"> </span><span style="color:#179fff">(</span><span style="color:#9cdcfe">error</span><span style="color:#179fff">)</span><span style="color:#d4d4d4"> </span><span style="color:#179fff">{</span></div>
</div>
<svg class="a" style="left:528px;top:397px" width="20" height="22" viewBox="0 0 20 22"><path d="M9.5 2 C5 2 2.5 5.3 2.5 8.5 C2.5 11 4 12.5 5.5 14 V17 H13.5 V14 C15 12.5 16.5 11 16.5 8.5 C16.5 5.3 14 2 9.5 2 Z" fill="#ffcc00"/><rect x="6" y="17.5" width="7" height="2.5" fill="#ffcc00"/><path d="M7.5 10 L9.5 13 L11.5 10" stroke="#1f1f1f" stroke-width="1.2" fill="none"/></svg>
<svg class="a" style="left:1200px;top:98px" width="128" height="500" opacity="0.5"><rect x="18.3" y="31.4" width="2.8" height="1.8" fill="#6a9955"/><rect x="22.5" y="31.4" width="60.6" height="1.8" fill="#6a9955"/><rect x="18.3" y="34.2" width="5.6" height="1.8" fill="#ce9178"/><rect x="25.3" y="34.2" width="9.9" height="1.8" fill="#ce9178"/><rect x="18.3" y="39.8" width="8.5" height="1.8" fill="#c586c0"/><rect x="28.2" y="39.8" width="1.4" height="1.8" fill="#ffd700"/><rect x="31.0" y="39.8" width="11.3" height="1.8" fill="#9cdcfe"/><rect x="43.7" y="39.8" width="1.4" height="1.8" fill="#ffd700"/><rect x="46.5" y="39.8" width="5.6" height="1.8" fill="#c586c0"/><rect x="53.5" y="39.8" width="9.9" height="1.8" fill="#ce9178"/><rect x="18.3" y="42.6" width="8.5" height="1.8" fill="#c586c0"/><rect x="28.2" y="42.6" width="1.4" height="1.8" fill="#ffd700"/><rect x="31.0" y="42.6" width="5.6" height="1.8" fill="#9cdcfe"/><rect x="36.6" y="42.6" width="1.4" height="1.8" fill="#d4d4d4"/><rect x="39.5" y="42.6" width="15.5" height="1.8" fill="#9cdcfe"/><rect x="55.0" y="42.6" width="1.4" height="1.8" fill="#d4d4d4"/><rect x="57.8" y="42.6" width="14.1" height="1.8" fill="#9cdcfe"/><rect x="71.9" y="42.6" width="1.4" height="1.8" fill="#d4d4d4"/><rect x="74.7" y="42.6" width="12.7" height="1.8" fill="#9cdcfe"/><rect x="88.8" y="42.6" width="1.4" height="1.8" fill="#ffd700"/><rect x="91.6" y="42.6" width="5.6" height="1.8" fill="#c586c0"/><rect x="98.7" y="42.6" width="8.3" height="1.8" fill="#ce9178"/><rect x="18.3" y="45.5" width="8.5" height="1.8" fill="#c586c0"/><rect x="28.2" y="45.5" width="1.4" height="1.8" fill="#ffd700"/><rect x="31.0" y="45.5" width="8.5" height="1.8" fill="#9cdcfe"/><rect x="40.9" y="45.5" width="1.4" height="1.8" fill="#ffd700"/><rect x="43.7" y="45.5" width="5.6" height="1.8" fill="#c586c0"/><rect x="50.7" y="45.5" width="33.8" height="1.8" fill="#ce9178"/><rect x="18.3" y="48.3" width="8.5" height="1.8" fill="#c586c0"/><rect x="28.2" y="48.3" width="1.4" height="1.8" fill="#ffd700"/><rect x="31.0" y="48.3" width="7.0" height="1.8" fill="#9cdcfe"/><rect x="39.5" y="48.3" width="1.4" height="1.8" fill="#ffd700"/><rect x="42.3" y="48.3" width="5.6" height="1.8" fill="#c586c0"/><rect x="49.3" y="48.3" width="32.4" height="1.8" fill="#ce9178"/><rect x="18.3" y="51.1" width="8.5" height="1.8" fill="#c586c0"/><rect x="28.2" y="51.1" width="1.4" height="1.8" fill="#ffd700"/><rect x="31.0" y="51.1" width="9.9" height="1.8" fill="#9cdcfe"/><rect x="40.9" y="51.1" width="1.4" height="1.8" fill="#d4d4d4"/><rect x="43.7" y="51.1" width="7.0" height="1.8" fill="#9cdcfe"/><rect x="50.7" y="51.1" width="1.4" height="1.8" fill="#d4d4d4"/><rect x="53.5" y="51.1" width="1.4" height="1.8" fill="#9cdcfe"/><rect x="56.4" y="51.1" width="1.4" height="1.8" fill="#ffd700"/><rect x="59.2" y="51.1" width="5.6" height="1.8" fill="#c586c0"/><rect x="66.2" y="51.1" width="19.7" height="1.8" fill="#ce9178"/><rect x="18.3" y="53.9" width="8.5" height="1.8" fill="#c586c0"/><rect x="28.2" y="53.9" width="1.4" height="1.8" fill="#ffd700"/><rect x="31.0" y="53.9" width="11.3" height="1.8" fill="#9cdcfe"/><rect x="43.7" y="53.9" width="1.4" height="1.8" fill="#ffd700"/><rect x="46.5" y="53.9" width="5.6" height="1.8" fill="#c586c0"/><rect x="53.5" y="53.9" width="26.8" height="1.8" fill="#ce9178"/><rect x="18.3" y="56.7" width="8.5" height="1.8" fill="#c586c0"/><rect x="28.2" y="56.7" width="1.4" height="1.8" fill="#ffd700"/><rect x="31.0" y="56.7" width="26.8" height="1.8" fill="#9cdcfe"/><rect x="57.8" y="56.7" width="1.4" height="1.8" fill="#d4d4d4"/><rect x="60.6" y="56.7" width="31.0" height="1.8" fill="#9cdcfe"/><rect x="93.0" y="56.7" width="1.4" height="1.8" fill="#ffd700"/><rect x="95.8" y="56.7" width="5.6" height="1.8" fill="#c586c0"/><rect x="102.9" y="56.7" width="4.1" height="1.8" fill="#ce9178"/><rect x="18.3" y="62.3" width="12.7" height="1.8" fill="#569cd6"/><rect x="32.4" y="62.3" width="31.0" height="1.8" fill="#4ec9b0"/><rect x="64.8" y="62.3" width="1.4" height="1.8" fill="#ffd700"/><rect x="21.1" y="65.1" width="12.7" height="1.8" fill="#9cdcfe"/><rect x="33.8" y="65.1" width="1.4" height="1.8" fill="#d4d4d4"/><rect x="36.6" y="65.1" width="8.5" height="1.8" fill="#4ec9b0"/><rect x="45.1" y="65.1" width="2.8" height="1.8" fill="#da70d6"/><rect x="18.3" y="67.9" width="1.4" height="1.8" fill="#ffd700"/><rect x="18.3" y="73.6" width="7.0" height="1.8" fill="#569cd6"/><rect x="26.8" y="73.6" width="19.7" height="1.8" fill="#4fc1ff"/><rect x="47.9" y="73.6" width="1.4" height="1.8" fill="#d4d4d4"/><rect x="50.7" y="73.6" width="1.4" height="1.8" fill="#ffd700"/><rect x="21.1" y="76.4" width="8.5" height="1.8" fill="#9cdcfe"/><rect x="29.6" y="76.4" width="1.4" height="1.8" fill="#d4d4d4"/><rect x="32.4" y="76.4" width="1.4" height="1.8" fill="#da70d6"/><rect x="35.2" y="76.4" width="5.6" height="1.8" fill="#9cdcfe"/><rect x="40.9" y="76.4" width="1.4" height="1.8" fill="#d4d4d4"/><rect x="43.7" y="76.4" width="11.3" height="1.8" fill="#ce9178"/><rect x="55.0" y="76.4" width="1.4" height="1.8" fill="#d4d4d4"/><rect x="57.8" y="76.4" width="5.6" height="1.8" fill="#9cdcfe"/><rect x="63.4" y="76.4" width="1.4" height="1.8" fill="#d4d4d4"/><rect x="66.2" y="76.4" width="4.2" height="1.8" fill="#ce9178"/><rect x="71.9" y="76.4" width="1.4" height="1.8" fill="#da70d6"/><rect x="73.3" y="76.4" width="1.4" height="1.8" fill="#d4d4d4"/><rect x="21.1" y="79.2" width="8.5" height="1.8" fill="#9cdcfe"/><rect x="29.6" y="79.2" width="1.4" height="1.8" fill="#d4d4d4"/><rect x="32.4" y="79.2" width="1.4" height="1.8" fill="#da70d6"/><rect x="35.2" y="79.2" width="5.6" height="1.8" fill="#9cdcfe"/><rect x="40.9" y="79.2" width="1.4" height="1.8" fill="#d4d4d4"/><rect x="43.7" y="79.2" width="11.3" height="1.8" fill="#ce9178"/><rect x="55.0" y="79.2" width="1.4" height="1.8" fill="#d4d4d4"/><rect x="57.8" y="79.2" width="5.6" height="1.8" fill="#9cdcfe"/><rect x="63.4" y="79.2" width="1.4" height="1.8" fill="#d4d4d4"/><rect x="66.2" y="79.2" width="5.6" height="1.8" fill="#ce9178"/><rect x="73.3" y="79.2" width="1.4" height="1.8" fill="#da70d6"/><rect x="74.7" y="79.2" width="1.4" height="1.8" fill="#d4d4d4"/><rect x="21.1" y="82.0" width="9.9" height="1.8" fill="#9cdcfe"/><rect x="31.0" y="82.0" width="1.4" height="1.8" fill="#d4d4d4"/><rect x="33.8" y="82.0" width="1.4" height="1.8" fill="#da70d6"/><rect x="36.6" y="82.0" width="5.6" height="1.8" fill="#9cdcfe"/><rect x="42.3" y="82.0" width="1.4" height="1.8" fill="#d4d4d4"/><rect x="45.1" y="82.0" width="12.7" height="1.8" fill="#ce9178"/><rect x="57.8" y="82.0" width="1.4" height="1.8" fill="#d4d4d4"/><rect x="60.6" y="82.0" width="5.6" height="1.8" fill="#9cdcfe"/><rect x="66.2" y="82.0" width="1.4" height="1.8" fill="#d4d4d4"/><rect x="69.1" y="82.0" width="4.2" height="1.8" fill="#ce9178"/><rect x="74.7" y="82.0" width="1.4" height="1.8" fill="#da70d6"/><rect x="18.3" y="84.8" width="1.4" height="1.8" fill="#ffd700"/><rect x="18.3" y="90.4" width="8.5" height="1.8" fill="#c586c0"/><rect x="28.2" y="90.4" width="11.3" height="1.8" fill="#569cd6"/><rect x="40.9" y="90.4" width="24.0" height="1.8" fill="#dcdcaa"/><rect x="64.8" y="90.4" width="1.4" height="1.8" fill="#ffd700"/><rect x="66.2" y="90.4" width="1.4" height="1.8" fill="#da70d6"/><rect x="69.1" y="90.4" width="12.7" height="1.8" fill="#9cdcfe"/><rect x="83.2" y="90.4" width="1.4" height="1.8" fill="#da70d6"/><rect x="84.6" y="90.4" width="1.4" height="1.8" fill="#d4d4d4"/><rect x="87.4" y="90.4" width="19.6" height="1.8" fill="#4ec9b0"/><rect x="21.1" y="93.2" width="7.0" height="1.8" fill="#569cd6"/><rect x="29.6" y="93.2" width="1.4" height="1.8" fill="#da70d6"/><rect x="31.0" y="93.2" width="9.9" height="1.8" fill="#4fc1ff"/><rect x="40.9" y="93.2" width="1.4" height="1.8" fill="#d4d4d4"/><rect x="43.7" y="93.2" width="14.1" height="1.8" fill="#dcdcaa"/><rect x="57.8" y="93.2" width="1.4" height="1.8" fill="#da70d6"/><rect x="60.6" y="93.2" width="1.4" height="1.8" fill="#d4d4d4"/><rect x="63.4" y="93.2" width="11.3" height="1.8" fill="#dcdcaa"/><rect x="74.7" y="93.2" width="1.4" height="1.8" fill="#da70d6"/><rect x="76.1" y="93.2" width="8.5" height="1.8" fill="#4ec9b0"/><rect x="86.0" y="93.2" width="1.4" height="1.8" fill="#d4d4d4"/><rect x="88.8" y="93.2" width="5.6" height="1.8" fill="#4ec9b0"/><rect x="94.4" y="93.2" width="1.4" height="1.8" fill="#da70d6"/><rect x="95.8" y="93.2" width="1.4" height="1.8" fill="#da70d6"/><rect x="97.3" y="93.2" width="5.6" height="1.8" fill="#569cd6"/><rect x="102.9" y="93.2" width="1.4" height="1.8" fill="#da70d6"/><rect x="21.1" y="96.0" width="7.0" height="1.8" fill="#569cd6"/><rect x="29.6" y="96.0" width="1.4" height="1.8" fill="#da70d6"/><rect x="32.4" y="96.0" width="7.0" height="1.8" fill="#dcdcaa"/><rect x="40.9" y="96.0" width="1.4" height="1.8" fill="#da70d6"/><rect x="43.7" y="96.0" width="1.4" height="1.8" fill="#d4d4d4"/><rect x="46.5" y="96.0" width="11.3" height="1.8" fill="#dcdcaa"/><rect x="57.8" y="96.0" width="2.8" height="1.8" fill="#da70d6"/><rect x="21.1" y="101.7" width="7.0" height="1.8" fill="#569cd6"/><rect x="29.6" y="101.7" width="18.3" height="1.8" fill="#dcdcaa"/><rect x="49.3" y="101.7" width="1.4" height="1.8" fill="#d4d4d4"/><rect x="52.1" y="101.7" width="7.0" height="1.8" fill="#569cd6"/><rect x="60.6" y="101.7" width="1.4" height="1.8" fill="#da70d6"/><rect x="62.0" y="101.7" width="11.3" height="1.8" fill="#9cdcfe"/><rect x="73.3" y="101.7" width="1.4" height="1.8" fill="#d4d4d4"/><rect x="76.1" y="101.7" width="8.5" height="1.8" fill="#4ec9b0"/><rect x="84.6" y="101.7" width="1.4" height="1.8" fill="#da70d6"/><rect x="87.4" y="101.7" width="2.8" height="1.8" fill="#569cd6"/><rect x="91.6" y="101.7" width="1.4" height="1.8" fill="#da70d6"/><rect x="23.9" y="104.5" width="14.1" height="1.8" fill="#dcdcaa"/><rect x="38.0" y="104.5" width="1.4" height="1.8" fill="#179fff"/><rect x="39.5" y="104.5" width="11.3" height="1.8" fill="#9cdcfe"/><rect x="50.7" y="104.5" width="1.4" height="1.8" fill="#179fff"/><rect x="23.9" y="110.1" width="4.2" height="1.8" fill="#c586c0"/><rect x="29.6" y="110.1" width="1.4" height="1.8" fill="#179fff"/><rect x="26.8" y="112.9" width="7.0" height="1.8" fill="#c586c0"/><rect x="35.2" y="112.9" width="26.8" height="1.8" fill="#dcdcaa"/><rect x="62.0" y="112.9" width="1.4" height="1.8" fill="#ffd700"/><rect x="63.4" y="112.9" width="11.3" height="1.8" fill="#9cdcfe"/><rect x="74.7" y="112.9" width="1.4" height="1.8" fill="#ffd700"/><rect x="26.8" y="115.7" width="7.0" height="1.8" fill="#dcdcaa"/><rect x="33.8" y="115.7" width="1.4" height="1.8" fill="#ffd700"/><rect x="35.2" y="115.7" width="1.4" height="1.8" fill="#da70d6"/><rect x="29.6" y="118.5" width="7.0" height="1.8" fill="#9cdcfe"/><rect x="36.6" y="118.5" width="1.4" height="1.8" fill="#d4d4d4"/><rect x="39.5" y="118.5" width="12.7" height="1.8" fill="#ce9178"/><rect x="53.5" y="118.5" width="14.1" height="1.8" fill="#ce9178"/><rect x="67.6" y="118.5" width="1.4" height="1.8" fill="#d4d4d4"/><rect x="29.6" y="121.3" width="15.5" height="1.8" fill="#9cdcfe"/><rect x="45.1" y="121.3" width="1.4" height="1.8" fill="#d4d4d4"/><rect x="47.9" y="121.3" width="1.4" height="1.8" fill="#ce9178"/><rect x="49.3" y="121.3" width="2.8" height="1.8" fill="#569cd6"/><rect x="52.1" y="121.3" width="19.7" height="1.8" fill="#4fc1ff"/><rect x="71.9" y="121.3" width="1.4" height="1.8" fill="#179fff"/><rect x="73.3" y="121.3" width="11.3" height="1.8" fill="#9cdcfe"/><rect x="86.0" y="121.3" width="2.8" height="1.8" fill="#c586c0"/><rect x="90.2" y="121.3" width="7.0" height="1.8" fill="#569cd6"/><rect x="98.7" y="121.3" width="8.3" height="1.8" fill="#569cd6"/><rect x="26.8" y="124.1" width="1.4" height="1.8" fill="#da70d6"/><rect x="28.2" y="124.1" width="1.4" height="1.8" fill="#ffd700"/><rect x="23.9" y="126.9" width="1.4" height="1.8" fill="#179fff"/><rect x="26.8" y="126.9" width="7.0" height="1.8" fill="#c586c0"/><rect x="35.2" y="126.9" width="1.4" height="1.8" fill="#179fff"/><rect x="36.6" y="126.9" width="7.0" height="1.8" fill="#9cdcfe"/><rect x="43.7" y="126.9" width="1.4" height="1.8" fill="#179fff"/><rect x="46.5" y="126.9" width="1.4" height="1.8" fill="#179fff"/><rect x="26.8" y="129.8" width="7.0" height="1.8" fill="#dcdcaa"/><rect x="33.8" y="129.8" width="1.4" height="1.8" fill="#da70d6"/><rect x="35.2" y="129.8" width="1.4" height="1.8" fill="#da70d6"/><rect x="29.6" y="132.6" width="7.0" height="1.8" fill="#9cdcfe"/><rect x="36.6" y="132.6" width="1.4" height="1.8" fill="#d4d4d4"/><rect x="39.5" y="132.6" width="26.8" height="1.8" fill="#ce9178"/><rect x="66.2" y="132.6" width="1.4" height="1.8" fill="#d4d4d4"/><rect x="29.6" y="135.4" width="15.5" height="1.8" fill="#9cdcfe"/><rect x="45.1" y="135.4" width="1.4" height="1.8" fill="#d4d4d4"/><rect x="47.9" y="135.4" width="59.1" height="1.8" fill="#ce9178"/><rect x="29.6" y="138.2" width="9.9" height="1.8" fill="#9cdcfe"/><rect x="39.5" y="138.2" width="1.4" height="1.8" fill="#d4d4d4"/><rect x="42.3" y="138.2" width="18.3" height="1.8" fill="#ce9178"/><rect x="60.6" y="138.2" width="1.4" height="1.8" fill="#d4d4d4"/><rect x="26.8" y="141.0" width="1.4" height="1.8" fill="#da70d6"/><rect x="28.2" y="141.0" width="1.4" height="1.8" fill="#da70d6"/><rect x="23.9" y="143.8" width="1.4" height="1.8" fill="#da70d6"/><rect x="26.8" y="143.8" width="9.9" height="1.8" fill="#c586c0"/><rect x="38.0" y="143.8" width="1.4" height="1.8" fill="#da70d6"/><rect x="26.8" y="146.6" width="14.1" height="1.8" fill="#dcdcaa"/><rect x="40.9" y="146.6" width="1.4" height="1.8" fill="#da70d6"/><rect x="42.3" y="146.6" width="5.6" height="1.8" fill="#569cd6"/><rect x="47.9" y="146.6" width="1.4" height="1.8" fill="#da70d6"/><rect x="23.9" y="149.4" width="1.4" height="1.8" fill="#da70d6"/><rect x="21.1" y="152.2" width="1.4" height="1.8" fill="#da70d6"/><rect x="21.1" y="157.8" width="7.0" height="1.8" fill="#569cd6"/><rect x="29.6" y="157.8" width="22.6" height="1.8" fill="#9cdcfe"/><rect x="53.5" y="157.8" width="1.4" height="1.8" fill="#d4d4d4"/><rect x="56.4" y="157.8" width="7.0" height="1.8" fill="#569cd6"/><rect x="64.8" y="157.8" width="1.4" height="1.8" fill="#da70d6"/><rect x="66.2" y="157.8" width="11.3" height="1.8" fill="#9cdcfe"/><rect x="77.5" y="157.8" width="1.4" height="1.8" fill="#d4d4d4"/><rect x="80.3" y="157.8" width="8.5" height="1.8" fill="#9cdcfe"/><rect x="88.8" y="157.8" width="1.4" height="1.8" fill="#da70d6"/><rect x="91.6" y="157.8" width="2.8" height="1.8" fill="#d4d4d4"/><rect x="95.8" y="157.8" width="1.4" height="1.8" fill="#da70d6"/><rect x="23.9" y="160.7" width="14.1" height="1.8" fill="#dcdcaa"/><rect x="38.0" y="160.7" width="1.4" height="1.8" fill="#da70d6"/><rect x="39.5" y="160.7" width="11.3" height="1.8" fill="#9cdcfe"/><rect x="50.7" y="160.7" width="1.4" height="1.8" fill="#da70d6"/><rect x="23.9" y="166.3" width="4.2" height="1.8" fill="#c586c0"/><rect x="29.6" y="166.3" width="1.4" height="1.8" fill="#da70d6"/><rect x="26.8" y="169.1" width="7.0" height="1.8" fill="#c586c0"/><rect x="35.2" y="169.1" width="31.0" height="1.8" fill="#dcdcaa"/><rect x="66.2" y="169.1" width="1.4" height="1.8" fill="#da70d6"/><rect x="67.6" y="169.1" width="11.3" height="1.8" fill="#9cdcfe"/><rect x="78.9" y="169.1" width="1.4" height="1.8" fill="#da70d6"/><rect x="26.8" y="171.9" width="7.0" height="1.8" fill="#dcdcaa"/><rect x="33.8" y="171.9" width="1.4" height="1.8" fill="#da70d6"/><rect x="35.2" y="171.9" width="1.4" height="1.8" fill="#da70d6"/><rect x="29.6" y="174.7" width="7.0" height="1.8" fill="#9cdcfe"/><rect x="36.6" y="174.7" width="1.4" height="1.8" fill="#d4d4d4"/><rect x="39.5" y="174.7" width="32.4" height="1.8" fill="#ce9178"/><rect x="71.9" y="174.7" width="1.4" height="1.8" fill="#d4d4d4"/><rect x="29.6" y="177.5" width="15.5" height="1.8" fill="#9cdcfe"/><rect x="45.1" y="177.5" width="1.4" height="1.8" fill="#d4d4d4"/><rect x="47.9" y="177.5" width="59.1" height="1.8" fill="#ce9178"/><rect x="26.8" y="180.3" width="1.4" height="1.8" fill="#da70d6"/><rect x="28.2" y="180.3" width="1.4" height="1.8" fill="#da70d6"/><rect x="23.9" y="183.1" width="1.4" height="1.8" fill="#da70d6"/><rect x="26.8" y="183.1" width="7.0" height="1.8" fill="#c586c0"/><rect x="35.2" y="183.1" width="1.4" height="1.8" fill="#da70d6"/><rect x="36.6" y="183.1" width="7.0" height="1.8" fill="#9cdcfe"/><rect x="43.7" y="183.1" width="1.4" height="1.8" fill="#da70d6"/><rect x="46.5" y="183.1" width="1.4" height="1.8" fill="#da70d6"/><rect x="26.8" y="186.0" width="7.0" height="1.8" fill="#dcdcaa"/><rect x="33.8" y="186.0" width="1.4" height="1.8" fill="#da70d6"/><rect x="35.2" y="186.0" width="1.4" height="1.8" fill="#da70d6"/><rect x="29.6" y="188.8" width="7.0" height="1.8" fill="#9cdcfe"/><rect x="36.6" y="188.8" width="1.4" height="1.8" fill="#d4d4d4"/><rect x="39.5" y="188.8" width="31.0" height="1.8" fill="#ce9178"/><rect x="70.5" y="188.8" width="1.4" height="1.8" fill="#d4d4d4"/><rect x="29.6" y="191.6" width="15.5" height="1.8" fill="#9cdcfe"/><rect x="45.1" y="191.6" width="1.4" height="1.8" fill="#d4d4d4"/><rect x="47.9" y="191.6" width="45.1" height="1.8" fill="#ce9178"/><rect x="93.0" y="191.6" width="1.4" height="1.8" fill="#d4d4d4"/><rect x="29.6" y="194.4" width="9.9" height="1.8" fill="#9cdcfe"/><rect x="39.5" y="194.4" width="1.4" height="1.8" fill="#d4d4d4"/><rect x="42.3" y="194.4" width="18.3" height="1.8" fill="#ce9178"/><rect x="60.6" y="194.4" width="1.4" height="1.8" fill="#d4d4d4"/><rect x="26.8" y="197.2" width="1.4" height="1.8" fill="#da70d6"/><rect x="28.2" y="197.2" width="1.4" height="1.8" fill="#da70d6"/><rect x="23.9" y="200.0" width="1.4" height="1.8" fill="#da70d6"/><rect x="26.8" y="200.0" width="9.9" height="1.8" fill="#c586c0"/><rect x="38.0" y="200.0" width="1.4" height="1.8" fill="#da70d6"/><rect x="26.8" y="202.8" width="14.1" height="1.8" fill="#dcdcaa"/><rect x="40.9" y="202.8" width="1.4" height="1.8" fill="#da70d6"/><rect x="42.3" y="202.8" width="5.6" height="1.8" fill="#569cd6"/><rect x="47.9" y="202.8" width="1.4" height="1.8" fill="#da70d6"/><rect x="23.9" y="205.6" width="1.4" height="1.8" fill="#da70d6"/><rect x="21.1" y="208.4" width="1.4" height="1.8" fill="#da70d6"/><rect x="21.1" y="214.0" width="8.5" height="1.8" fill="#c586c0"/><rect x="31.0" y="214.0" width="1.4" height="1.8" fill="#da70d6"/><rect x="23.9" y="216.9" width="7.0" height="1.8" fill="#569cd6"/><rect x="31.0" y="216.9" width="1.4" height="1.8" fill="#d4d4d4"/><rect x="26.8" y="219.7" width="15.5" height="1.8" fill="#569cd6"/><rect x="42.3" y="219.7" width="1.4" height="1.8" fill="#d4d4d4"/><rect x="29.6" y="222.5" width="14.1" height="1.8" fill="#569cd6"/><rect x="43.7" y="222.5" width="1.4" height="1.8" fill="#d4d4d4"/><rect x="45.1" y="222.5" width="12.7" height="1.8" fill="#4ec9b0"/><rect x="59.2" y="222.5" width="11.3" height="1.8" fill="#4ec9b0"/><rect x="70.5" y="222.5" width="15.5" height="1.8" fill="#569cd6"/><rect x="86.0" y="222.5" width="1.4" height="1.8" fill="#d4d4d4"/><rect x="26.8" y="225.3" width="16.9" height="1.8" fill="#569cd6"/><rect x="43.7" y="225.3" width="1.4" height="1.8" fill="#d4d4d4"/><rect x="26.8" y="228.1" width="16.9" height="1.8" fill="#569cd6"/><rect x="45.1" y="228.1" width="12.7" height="1.8" fill="#9cdcfe"/><rect x="57.8" y="228.1" width="1.4" height="1.8" fill="#d4d4d4"/><rect x="59.2" y="228.1" width="15.5" height="1.8" fill="#ce9178"/><rect x="74.7" y="228.1" width="1.4" height="1.8" fill="#d4d4d4"/><rect x="29.6" y="230.9" width="1.4" height="1.8" fill="#da70d6"/><rect x="31.0" y="230.9" width="8.5" height="1.8" fill="#4ec9b0"/><rect x="39.5" y="230.9" width="1.4" height="1.8" fill="#d4d4d4"/><rect x="40.9" y="230.9" width="9.9" height="1.8" fill="#dcdcaa"/><rect x="50.7" y="230.9" width="1.4" height="1.8" fill="#da70d6"/><rect x="52.1" y="230.9" width="19.7" height="1.8" fill="#9cdcfe"/><rect x="71.9" y="230.9" width="1.4" height="1.8" fill="#da70d6"/><rect x="73.3" y="230.9" width="1.4" height="1.8" fill="#d4d4d4"/><rect x="74.7" y="230.9" width="4.2" height="1.8" fill="#dcdcaa"/><rect x="78.9" y="230.9" width="1.4" height="1.8" fill="#da70d6"/><rect x="80.3" y="230.9" width="1.4" height="1.8" fill="#da70d6"/><rect x="81.8" y="230.9" width="1.4" height="1.8" fill="#da70d6"/><rect x="83.2" y="230.9" width="4.2" height="1.8" fill="#9cdcfe"/><rect x="87.4" y="230.9" width="1.4" height="1.8" fill="#d4d4d4"/><rect x="90.2" y="230.9" width="8.5" height="1.8" fill="#9cdcfe"/><rect x="98.7" y="230.9" width="1.4" height="1.8" fill="#da70d6"/><rect x="100.1" y="230.9" width="1.4" height="1.8" fill="#da70d6"/><rect x="102.9" y="230.9" width="2.8" height="1.8" fill="#d4d4d4"/><rect x="32.4" y="233.7" width="7.0" height="1.8" fill="#569cd6"/><rect x="40.9" y="233.7" width="15.5" height="1.8" fill="#9cdcfe"/><rect x="57.8" y="233.7" width="1.4" height="1.8" fill="#d4d4d4"/><rect x="60.6" y="233.7" width="12.7" height="1.8" fill="#9cdcfe"/><rect x="73.3" y="233.7" width="1.4" height="1.8" fill="#d4d4d4"/><rect x="74.7" y="233.7" width="11.3" height="1.8" fill="#dcdcaa"/><rect x="86.0" y="233.7" width="1.4" height="1.8" fill="#da70d6"/><rect x="87.4" y="233.7" width="4.2" height="1.8" fill="#9cdcfe"/><rect x="91.6" y="233.7" width="1.4" height="1.8" fill="#da70d6"/><rect x="32.4" y="236.5" width="7.0" height="1.8" fill="#569cd6"/><rect x="40.9" y="236.5" width="12.7" height="1.8" fill="#9cdcfe"/><rect x="55.0" y="236.5" width="1.4" height="1.8" fill="#d4d4d4"/><rect x="57.8" y="236.5" width="9.9" height="1.8" fill="#9cdcfe"/><rect x="69.1" y="236.5" width="4.2" height="1.8" fill="#d4d4d4"/><rect x="74.7" y="236.5" width="4.2" height="1.8" fill="#9cdcfe"/><rect x="32.4" y="242.2" width="8.5" height="1.8" fill="#c586c0"/><rect x="42.3" y="242.2" width="1.4" height="1.8" fill="#da70d6"/><rect x="35.2" y="245.0" width="5.6" height="1.8" fill="#569cd6"/><rect x="38.0" y="247.8" width="4.2" height="1.8" fill="#9cdcfe"/><rect x="42.3" y="247.8" width="1.4" height="1.8" fill="#d4d4d4"/><rect x="43.7" y="247.8" width="1.4" height="1.8" fill="#da70d6"/><rect x="45.1" y="247.8" width="4.2" height="1.8" fill="#9cdcfe"/><rect x="49.3" y="247.8" width="1.4" height="1.8" fill="#da70d6"/><rect x="38.0" y="250.6" width="12.7" height="1.8" fill="#9cdcfe"/><rect x="50.7" y="250.6" width="1.4" height="1.8" fill="#d4d4d4"/><rect x="52.1" y="250.6" width="54.9" height="1.8" fill="#ce9178"/><rect x="35.2" y="253.4" width="1.4" height="1.8" fill="#d4d4d4"/><rect x="38.0" y="256.2" width="5.6" height="1.8" fill="#569cd6"/><rect x="45.1" y="256.2" width="12.7" height="1.8" fill="#9cdcfe"/><rect x="57.8" y="256.2" width="1.4" height="1.8" fill="#d4d4d4"/><rect x="59.2" y="256.2" width="35.2" height="1.8" fill="#ce9178"/><rect x="94.4" y="256.2" width="1.4" height="1.8" fill="#d4d4d4"/><rect x="40.9" y="259.0" width="5.6" height="1.8" fill="#569cd6"/><rect x="47.9" y="259.0" width="12.7" height="1.8" fill="#9cdcfe"/><rect x="60.6" y="259.0" width="1.4" height="1.8" fill="#d4d4d4"/><rect x="62.0" y="259.0" width="45.0" height="1.8" fill="#ce9178"/><rect x="43.7" y="261.8" width="7.0" height="1.8" fill="#569cd6"/><rect x="52.1" y="261.8" width="12.7" height="1.8" fill="#9cdcfe"/><rect x="64.8" y="261.8" width="1.4" height="1.8" fill="#d4d4d4"/><rect x="66.2" y="261.8" width="29.6" height="1.8" fill="#ce9178"/><rect x="95.8" y="261.8" width="1.4" height="1.8" fill="#d4d4d4"/><rect x="46.5" y="264.6" width="1.4" height="1.8" fill="#da70d6"/><rect x="47.9" y="264.6" width="8.5" height="1.8" fill="#9cdcfe"/><rect x="56.4" y="264.6" width="1.4" height="1.8" fill="#d4d4d4"/><rect x="57.8" y="264.6" width="5.6" height="1.8" fill="#9cdcfe"/><rect x="63.4" y="264.6" width="1.4" height="1.8" fill="#da70d6"/><rect x="43.7" y="267.4" width="8.5" height="1.8" fill="#569cd6"/><rect x="52.1" y="267.4" width="1.4" height="1.8" fill="#d4d4d4"/><rect x="40.9" y="270.2" width="7.0" height="1.8" fill="#569cd6"/><rect x="47.9" y="270.2" width="1.4" height="1.8" fill="#d4d4d4"/><rect x="40.9" y="273.1" width="5.6" height="1.8" fill="#569cd6"/><rect x="46.5" y="273.1" width="1.4" height="1.8" fill="#d4d4d4"/><rect x="43.7" y="275.9" width="2.8" height="1.8" fill="#569cd6"/><rect x="47.9" y="275.9" width="12.7" height="1.8" fill="#9cdcfe"/><rect x="60.6" y="275.9" width="1.4" height="1.8" fill="#d4d4d4"/><rect x="62.0" y="275.9" width="18.3" height="1.8" fill="#ce9178"/><rect x="80.3" y="275.9" width="1.4" height="1.8" fill="#d4d4d4"/><rect x="81.8" y="275.9" width="1.4" height="1.8" fill="#da70d6"/><rect x="83.2" y="275.9" width="8.5" height="1.8" fill="#9cdcfe"/><rect x="91.6" y="275.9" width="1.4" height="1.8" fill="#d4d4d4"/><rect x="93.0" y="275.9" width="5.6" height="1.8" fill="#9cdcfe"/><rect x="98.7" y="275.9" width="1.4" height="1.8" fill="#da70d6"/><rect x="100.1" y="275.9" width="4.2" height="1.8" fill="#569cd6"/><rect x="104.3" y="275.9" width="1.4" height="1.8" fill="#d4d4d4"/><rect x="43.7" y="278.7" width="1.4" height="1.8" fill="#da70d6"/><rect x="45.1" y="278.7" width="15.5" height="1.8" fill="#9cdcfe"/><rect x="62.0" y="278.7" width="2.8" height="1.8" fill="#d4d4d4"/><rect x="66.2" y="278.7" width="1.4" height="1.8" fill="#da70d6"/><rect x="46.5" y="281.5" width="5.6" height="1.8" fill="#569cd6"/><rect x="53.5" y="281.5" width="12.7" height="1.8" fill="#9cdcfe"/><rect x="66.2" y="281.5" width="1.4" height="1.8" fill="#d4d4d4"/><rect x="67.6" y="281.5" width="26.8" height="1.8" fill="#ce9178"/><rect x="94.4" y="281.5" width="1.4" height="1.8" fill="#d4d4d4"/><rect x="49.3" y="284.3" width="8.5" height="1.8" fill="#569cd6"/><rect x="59.2" y="284.3" width="9.9" height="1.8" fill="#9cdcfe"/><rect x="69.1" y="284.3" width="1.4" height="1.8" fill="#d4d4d4"/><rect x="70.5" y="284.3" width="15.5" height="1.8" fill="#ce9178"/><rect x="87.4" y="284.3" width="12.7" height="1.8" fill="#9cdcfe"/><rect x="100.1" y="284.3" width="1.4" height="1.8" fill="#d4d4d4"/><rect x="101.5" y="284.3" width="5.5" height="1.8" fill="#ce9178"/><rect x="52.1" y="287.1" width="7.0" height="1.8" fill="#569cd6"/><rect x="60.6" y="287.1" width="12.7" height="1.8" fill="#9cdcfe"/><rect x="73.3" y="287.1" width="1.4" height="1.8" fill="#d4d4d4"/><rect x="74.7" y="287.1" width="32.3" height="1.8" fill="#ce9178"/><rect x="55.0" y="289.9" width="8.5" height="1.8" fill="#569cd6"/><rect x="64.8" y="289.9" width="12.7" height="1.8" fill="#9cdcfe"/><rect x="77.5" y="289.9" width="1.4" height="1.8" fill="#d4d4d4"/><rect x="78.9" y="289.9" width="12.7" height="1.8" fill="#ce9178"/><rect x="93.0" y="289.9" width="2.8" height="1.8" fill="#d4d4d4"/><rect x="55.0" y="292.7" width="12.7" height="1.8" fill="#4ec9b0"/><rect x="52.1" y="295.5" width="8.5" height="1.8" fill="#569cd6"/><rect x="60.6" y="295.5" width="1.4" height="1.8" fill="#d4d4d4"/><rect x="49.3" y="298.3" width="9.9" height="1.8" fill="#569cd6"/><rect x="59.2" y="298.3" width="1.4" height="1.8" fill="#d4d4d4"/><rect x="46.5" y="301.2" width="7.0" height="1.8" fill="#569cd6"/><rect x="53.5" y="301.2" width="1.4" height="1.8" fill="#d4d4d4"/><rect x="43.7" y="304.0" width="1.4" height="1.8" fill="#da70d6"/><rect x="45.1" y="304.0" width="1.4" height="1.8" fill="#da70d6"/><rect x="40.9" y="306.8" width="7.0" height="1.8" fill="#569cd6"/><rect x="47.9" y="306.8" width="1.4" height="1.8" fill="#d4d4d4"/><rect x="38.0" y="309.6" width="7.0" height="1.8" fill="#569cd6"/><rect x="45.1" y="309.6" width="1.4" height="1.8" fill="#d4d4d4"/><rect x="38.0" y="312.4" width="5.6" height="1.8" fill="#569cd6"/><rect x="43.7" y="312.4" width="1.4" height="1.8" fill="#d4d4d4"/><rect x="40.9" y="315.2" width="1.4" height="1.8" fill="#da70d6"/><rect x="42.3" y="315.2" width="15.5" height="1.8" fill="#9cdcfe"/><rect x="59.2" y="315.2" width="1.4" height="1.8" fill="#d4d4d4"/><rect x="62.0" y="315.2" width="1.4" height="1.8" fill="#da70d6"/><rect x="43.7" y="318.0" width="9.9" height="1.8" fill="#569cd6"/><rect x="46.5" y="320.8" width="9.9" height="1.8" fill="#9cdcfe"/><rect x="56.4" y="320.8" width="1.4" height="1.8" fill="#d4d4d4"/><rect x="57.8" y="320.8" width="12.7" height="1.8" fill="#ce9178"/><rect x="46.5" y="323.6" width="5.6" height="1.8" fill="#9cdcfe"/><rect x="52.1" y="323.6" width="1.4" height="1.8" fill="#d4d4d4"/><rect x="53.5" y="323.6" width="5.6" height="1.8" fill="#ce9178"/><rect x="46.5" y="326.4" width="9.9" height="1.8" fill="#9cdcfe"/><rect x="56.4" y="326.4" width="1.4" height="1.8" fill="#d4d4d4"/><rect x="57.8" y="326.4" width="1.4" height="1.8" fill="#da70d6"/><rect x="59.2" y="326.4" width="1.4" height="1.8" fill="#da70d6"/><rect x="60.6" y="326.4" width="1.4" height="1.8" fill="#da70d6"/><rect x="63.4" y="326.4" width="2.8" height="1.8" fill="#d4d4d4"/><rect x="67.6" y="326.4" width="22.6" height="1.8" fill="#dcdcaa"/><rect x="90.2" y="326.4" width="1.4" height="1.8" fill="#da70d6"/><rect x="91.6" y="326.4" width="4.2" height="1.8" fill="#9cdcfe"/><rect x="95.8" y="326.4" width="1.4" height="1.8" fill="#da70d6"/><rect x="97.3" y="326.4" width="1.4" height="1.8" fill="#da70d6"/><rect x="46.5" y="329.3" width="11.3" height="1.8" fill="#9cdcfe"/><rect x="57.8" y="329.3" width="1.4" height="1.8" fill="#d4d4d4"/><rect x="59.2" y="329.3" width="1.4" height="1.8" fill="#da70d6"/><rect x="60.6" y="329.3" width="12.7" height="1.8" fill="#9cdcfe"/><rect x="73.3" y="329.3" width="1.4" height="1.8" fill="#da70d6"/><rect x="43.7" y="332.1" width="1.4" height="1.8" fill="#d4d4d4"/><rect x="46.5" y="334.9" width="1.4" height="1.8" fill="#da70d6"/><rect x="47.9" y="334.9" width="12.7" height="1.8" fill="#9cdcfe"/><rect x="62.0" y="334.9" width="1.4" height="1.8" fill="#d4d4d4"/><rect x="64.8" y="334.9" width="1.4" height="1.8" fill="#da70d6"/><rect x="49.3" y="337.7" width="11.3" height="1.8" fill="#569cd6"/><rect x="62.0" y="337.7" width="12.7" height="1.8" fill="#9cdcfe"/><rect x="74.7" y="337.7" width="1.4" height="1.8" fill="#d4d4d4"/><rect x="76.1" y="337.7" width="30.9" height="1.8" fill="#ce9178"/><rect x="46.5" y="340.5" width="1.4" height="1.8" fill="#da70d6"/><rect x="49.3" y="340.5" width="1.4" height="1.8" fill="#d4d4d4"/><rect x="52.1" y="340.5" width="1.4" height="1.8" fill="#da70d6"/><rect x="49.3" y="343.3" width="2.8" height="1.8" fill="#569cd6"/><rect x="53.5" y="343.3" width="12.7" height="1.8" fill="#9cdcfe"/><rect x="66.2" y="343.3" width="1.4" height="1.8" fill="#d4d4d4"/><rect x="67.6" y="343.3" width="19.7" height="1.8" fill="#ce9178"/><rect x="88.8" y="343.3" width="2.8" height="1.8" fill="#d4d4d4"/><rect x="46.5" y="346.1" width="1.4" height="1.8" fill="#da70d6"/><rect x="47.9" y="346.1" width="1.4" height="1.8" fill="#da70d6"/><rect x="46.5" y="348.9" width="14.1" height="1.8" fill="#4ec9b0"/><rect x="43.7" y="351.7" width="11.3" height="1.8" fill="#569cd6"/><rect x="55.0" y="351.7" width="1.4" height="1.8" fill="#d4d4d4"/><rect x="40.9" y="354.6" width="1.4" height="1.8" fill="#da70d6"/><rect x="43.7" y="354.6" width="1.4" height="1.8" fill="#d4d4d4"/><rect x="46.5" y="354.6" width="1.4" height="1.8" fill="#da70d6"/><rect x="43.7" y="357.4" width="9.9" height="1.8" fill="#569cd6"/><rect x="46.5" y="360.2" width="5.6" height="1.8" fill="#9cdcfe"/><rect x="52.1" y="360.2" width="1.4" height="1.8" fill="#d4d4d4"/><rect x="53.5" y="360.2" width="5.6" height="1.8" fill="#ce9178"/><rect x="46.5" y="363.0" width="9.9" height="1.8" fill="#9cdcfe"/><rect x="56.4" y="363.0" width="1.4" height="1.8" fill="#d4d4d4"/><rect x="57.8" y="363.0" width="1.4" height="1.8" fill="#da70d6"/><rect x="59.2" y="363.0" width="1.4" height="1.8" fill="#da70d6"/><rect x="60.6" y="363.0" width="1.4" height="1.8" fill="#da70d6"/><rect x="63.4" y="363.0" width="2.8" height="1.8" fill="#d4d4d4"/><rect x="67.6" y="363.0" width="18.3" height="1.8" fill="#dcdcaa"/><rect x="86.0" y="363.0" width="1.4" height="1.8" fill="#da70d6"/><rect x="87.4" y="363.0" width="4.2" height="1.8" fill="#9cdcfe"/><rect x="91.6" y="363.0" width="1.4" height="1.8" fill="#da70d6"/><rect x="93.0" y="363.0" width="1.4" height="1.8" fill="#da70d6"/><rect x="46.5" y="365.8" width="11.3" height="1.8" fill="#9cdcfe"/><rect x="57.8" y="365.8" width="1.4" height="1.8" fill="#d4d4d4"/><rect x="59.2" y="365.8" width="1.4" height="1.8" fill="#da70d6"/><rect x="60.6" y="365.8" width="12.7" height="1.8" fill="#9cdcfe"/><rect x="73.3" y="365.8" width="1.4" height="1.8" fill="#da70d6"/><rect x="43.7" y="368.6" width="1.4" height="1.8" fill="#d4d4d4"/><rect x="46.5" y="371.4" width="1.4" height="1.8" fill="#da70d6"/><rect x="47.9" y="371.4" width="12.7" height="1.8" fill="#9cdcfe"/><rect x="62.0" y="371.4" width="1.4" height="1.8" fill="#d4d4d4"/><rect x="64.8" y="371.4" width="1.4" height="1.8" fill="#da70d6"/><rect x="49.3" y="374.2" width="11.3" height="1.8" fill="#569cd6"/><rect x="62.0" y="374.2" width="12.7" height="1.8" fill="#9cdcfe"/><rect x="74.7" y="374.2" width="1.4" height="1.8" fill="#d4d4d4"/><rect x="76.1" y="374.2" width="30.9" height="1.8" fill="#ce9178"/><rect x="46.5" y="377.0" width="1.4" height="1.8" fill="#da70d6"/><rect x="49.3" y="377.0" width="1.4" height="1.8" fill="#d4d4d4"/><rect x="52.1" y="377.0" width="5.6" height="1.8" fill="#569cd6"/><rect x="57.8" y="377.0" width="1.4" height="1.8" fill="#da70d6"/><rect x="46.5" y="379.8" width="9.9" height="1.8" fill="#4ec9b0"/><rect x="43.7" y="382.6" width="11.3" height="1.8" fill="#569cd6"/><rect x="55.0" y="382.6" width="1.4" height="1.8" fill="#d4d4d4"/><rect x="40.9" y="385.5" width="1.4" height="1.8" fill="#da70d6"/><rect x="42.3" y="385.5" width="1.4" height="1.8" fill="#da70d6"/><rect x="38.0" y="388.3" width="7.0" height="1.8" fill="#569cd6"/><rect x="45.1" y="388.3" width="1.4" height="1.8" fill="#d4d4d4"/><rect x="35.2" y="391.1" width="7.0" height="1.8" fill="#569cd6"/><rect x="42.3" y="391.1" width="1.4" height="1.8" fill="#d4d4d4"/><rect x="32.4" y="393.9" width="1.4" height="1.8" fill="#da70d6"/><rect x="29.6" y="396.7" width="1.4" height="1.8" fill="#da70d6"/><rect x="31.0" y="396.7" width="1.4" height="1.8" fill="#da70d6"/><rect x="32.4" y="396.7" width="1.4" height="1.8" fill="#da70d6"/><rect x="29.6" y="402.3" width="2.8" height="1.8" fill="#569cd6"/><rect x="33.8" y="402.3" width="12.7" height="1.8" fill="#9cdcfe"/><rect x="46.5" y="402.3" width="1.4" height="1.8" fill="#d4d4d4"/><rect x="47.9" y="402.3" width="43.7" height="1.8" fill="#ce9178"/><rect x="91.6" y="402.3" width="1.4" height="1.8" fill="#d4d4d4"/><rect x="32.4" y="405.1" width="9.9" height="1.8" fill="#4ec9b0"/><rect x="43.7" y="405.1" width="5.6" height="1.8" fill="#9cdcfe"/><rect x="50.7" y="405.1" width="11.3" height="1.8" fill="#9cdcfe"/><rect x="63.4" y="405.1" width="2.8" height="1.8" fill="#9cdcfe"/><rect x="67.6" y="405.1" width="5.6" height="1.8" fill="#9cdcfe"/><rect x="74.7" y="405.1" width="2.8" height="1.8" fill="#9cdcfe"/><rect x="78.9" y="405.1" width="8.5" height="1.8" fill="#9cdcfe"/><rect x="88.8" y="405.1" width="4.2" height="1.8" fill="#9cdcfe"/><rect x="94.4" y="405.1" width="5.6" height="1.8" fill="#9cdcfe"/><rect x="101.5" y="405.1" width="5.5" height="1.8" fill="#9cdcfe"/><rect x="32.4" y="407.9" width="8.5" height="1.8" fill="#9cdcfe"/><rect x="42.3" y="407.9" width="9.9" height="1.8" fill="#9cdcfe"/><rect x="52.1" y="407.9" width="1.4" height="1.8" fill="#d4d4d4"/><rect x="55.0" y="407.9" width="4.2" height="1.8" fill="#4ec9b0"/><rect x="60.6" y="407.9" width="4.2" height="1.8" fill="#9cdcfe"/><rect x="66.2" y="407.9" width="14.1" height="1.8" fill="#9cdcfe"/><rect x="81.8" y="407.9" width="2.8" height="1.8" fill="#9cdcfe"/><rect x="86.0" y="407.9" width="4.2" height="1.8" fill="#9cdcfe"/><rect x="91.6" y="407.9" width="5.6" height="1.8" fill="#9cdcfe"/><rect x="98.7" y="407.9" width="5.6" height="1.8" fill="#c586c0"/><rect x="105.7" y="407.9" width="1.3" height="1.8" fill="#9cdcfe"/><rect x="29.6" y="410.8" width="4.2" height="1.8" fill="#569cd6"/><rect x="33.8" y="410.8" width="1.4" height="1.8" fill="#d4d4d4"/><rect x="29.6" y="413.6" width="5.6" height="1.8" fill="#569cd6"/><rect x="36.6" y="413.6" width="12.7" height="1.8" fill="#9cdcfe"/><rect x="49.3" y="413.6" width="1.4" height="1.8" fill="#d4d4d4"/><rect x="50.7" y="413.6" width="21.1" height="1.8" fill="#ce9178"/><rect x="71.9" y="413.6" width="1.4" height="1.8" fill="#d4d4d4"/><rect x="32.4" y="416.4" width="2.8" height="1.8" fill="#569cd6"/><rect x="36.6" y="416.4" width="12.7" height="1.8" fill="#9cdcfe"/><rect x="49.3" y="416.4" width="1.4" height="1.8" fill="#d4d4d4"/><rect x="50.7" y="416.4" width="43.7" height="1.8" fill="#ce9178"/><rect x="94.4" y="416.4" width="1.4" height="1.8" fill="#d4d4d4"/><rect x="35.2" y="419.2" width="5.6" height="1.8" fill="#4ec9b0"/><rect x="42.3" y="419.2" width="8.5" height="1.8" fill="#9cdcfe"/><rect x="50.7" y="419.2" width="1.4" height="1.8" fill="#d4d4d4"/><rect x="53.5" y="419.2" width="1.4" height="1.8" fill="#da70d6"/><rect x="55.0" y="419.2" width="4.2" height="1.8" fill="#9cdcfe"/><rect x="60.6" y="419.2" width="5.6" height="1.8" fill="#4ec9b0"/><rect x="66.2" y="419.2" width="1.4" height="1.8" fill="#da70d6"/><rect x="67.6" y="419.2" width="1.4" height="1.8" fill="#da70d6"/><rect x="69.1" y="419.2" width="1.4" height="1.8" fill="#d4d4d4"/><rect x="70.5" y="419.2" width="25.4" height="1.8" fill="#dcdcaa"/><rect x="95.8" y="419.2" width="1.4" height="1.8" fill="#da70d6"/><rect x="97.3" y="419.2" width="1.4" height="1.8" fill="#da70d6"/><rect x="98.7" y="419.2" width="1.4" height="1.8" fill="#da70d6"/><rect x="32.4" y="422.0" width="4.2" height="1.8" fill="#569cd6"/><rect x="36.6" y="422.0" width="1.4" height="1.8" fill="#d4d4d4"/><rect x="29.6" y="424.8" width="7.0" height="1.8" fill="#569cd6"/><rect x="36.6" y="424.8" width="1.4" height="1.8" fill="#d4d4d4"/><rect x="29.6" y="427.6" width="5.6" height="1.8" fill="#569cd6"/><rect x="36.6" y="427.6" width="12.7" height="1.8" fill="#9cdcfe"/><rect x="49.3" y="427.6" width="1.4" height="1.8" fill="#d4d4d4"/><rect x="50.7" y="427.6" width="25.4" height="1.8" fill="#ce9178"/><rect x="76.1" y="427.6" width="1.4" height="1.8" fill="#d4d4d4"/><rect x="32.4" y="430.4" width="9.9" height="1.8" fill="#569cd6"/><rect x="43.7" y="430.4" width="9.9" height="1.8" fill="#9cdcfe"/><rect x="53.5" y="430.4" width="1.4" height="1.8" fill="#d4d4d4"/><rect x="55.0" y="430.4" width="9.9" height="1.8" fill="#ce9178"/><rect x="66.2" y="430.4" width="5.6" height="1.8" fill="#9cdcfe"/><rect x="71.9" y="430.4" width="1.4" height="1.8" fill="#d4d4d4"/><rect x="73.3" y="430.4" width="5.6" height="1.8" fill="#ce9178"/><rect x="78.9" y="430.4" width="1.4" height="1.8" fill="#d4d4d4"/><rect x="80.3" y="430.4" width="8.5" height="1.8" fill="#4ec9b0"/><rect x="88.8" y="430.4" width="11.3" height="1.8" fill="#569cd6"/><rect x="100.1" y="430.4" width="1.4" height="1.8" fill="#d4d4d4"/><rect x="29.6" y="433.2" width="7.0" height="1.8" fill="#569cd6"/><rect x="36.6" y="433.2" width="1.4" height="1.8" fill="#d4d4d4"/><rect x="26.8" y="436.0" width="18.3" height="1.8" fill="#569cd6"/><rect x="45.1" y="436.0" width="1.4" height="1.8" fill="#d4d4d4"/><rect x="23.9" y="438.9" width="8.5" height="1.8" fill="#569cd6"/><rect x="32.4" y="438.9" width="1.4" height="1.8" fill="#d4d4d4"/><rect x="21.1" y="441.7" width="1.4" height="1.8" fill="#da70d6"/><rect x="18.3" y="444.5" width="1.4" height="1.8" fill="#da70d6"/></svg>
<div class="a" style="left:1203px;top:129px;width:5px;height:917px;background:linear-gradient(90deg,rgba(0,0,0,0),rgba(0,0,0,0.25));"></div>
<div class="a" style="left:1207px;top:129px;width:101px;height:917px;background:rgba(255,255,255,0.012);"></div>
<div class="a" style="left:1308px;top:98px;width:1px;height:948px;background:#1b1b1b;"></div>
<div class="a" style="left:1309px;top:183px;width:18px;height:3px;background:#9a9a9a;"></div>
<div class="a" style="left:1328px;top:48px;width:592px;height:998px;background:#0a0a0a;"></div>
<div class="a" style="left:1328px;top:48px;width:1px;height:998px;background:#2b2b2b;"></div>
<div class="a" style="left:1329px;top:48px;width:591px;height:50px;background:#181818;"></div>
<div class="a" style="left:1329px;top:97px;width:591px;height:1px;background:#2b2b2b;"></div>
<div class="a" style="left:1329px;top:48px;width:166px;height:49px;background:#1f1f1f;"></div>
<div class="a" style="left:1329px;top:48px;width:166px;height:2px;background:#1a5e9e;"></div>
<div class="a" style="left:1495px;top:48px;width:1px;height:49px;background:#2b2b2b;"></div>
<svg class="a" style="left:1349px;top:64px" width="18" height="18" viewBox="0 0 18 18" fill="#ffffff"><rect x="1.5" y="2" width="14" height="1.8"/><rect x="1.5" y="6.5" width="10.5" height="1.8"/><rect x="1.5" y="11" width="14" height="1.8"/><rect x="1.5" y="15.5" width="10" height="1.8"/></svg>
<div id="t112" class="t" style="left:1371.75px;top:66.06px;font-size:18px;color:#ffffff;font-family:'Liberation Sans',sans-serif;letter-spacing:0.231px;">Shipboard</div>
<svg class="a" style="left:1465px;top:65px" width="20" height="19" viewBox="0 0 20 19" fill="none" stroke="#ffffff" stroke-width="1.9"><path d="M3.5 3.5 L16.5 16 M16.5 3.5 L3.5 16"/></svg>
<svg class="a" style="left:1841px;top:63px" width="24" height="22" viewBox="0 0 24 22" fill="none" stroke="#cccccc" stroke-width="1.5"><rect x="2.7" y="2.7" width="17.6" height="17" rx="1.5"/><path d="M11.5 3 V19.5"/></svg>
<svg class="a" style="left:1877px;top:70px" width="24" height="9"><rect x="2.4" y="2.9" width="3.2" height="3.2" fill="#ccc"/><rect x="9.9" y="2.9" width="3.2" height="3.2" fill="#ccc"/><rect x="17.4" y="2.9" width="3.2" height="3.2" fill="#ccc"/></svg>
<div class="a" style="left:1897px;top:98px;width:23px;height:948px;background:#1f1f1f;"></div>
<div class="a" style="left:1899.6px;top:122px;width:18px;height:749px;background:#444444;"></div>
<svg class="a" style="left:1897px;top:98px" width="23" height="948"><path d="M8 16 L13 10.5 L18 16 Z" fill="#4e4e4e"/><path d="M7.5 933 L12.5 938.5 L17.5 933 Z" fill="#4e4e4e"/></svg>
<svg class="a" style="left:1380px;top:127px" width="18" height="20" viewBox="0 0 18 20" fill="none" stroke="#e6e6e6" stroke-width="1.8"><path d="M12 4 L6 10.5 L12 17"/></svg>
<div id="t113" class="t" style="left:1428.00px;top:117.71px;font-size:18.3px;color:#f2f2f2;font-weight:700;font-family:'Liberation Sans',sans-serif;letter-spacing:-0.121px;">Sandbox</div>
<div id="t114" class="t" style="left:1428.00px;top:139.86px;font-size:17px;color:#9a9a9a;font-family:'Liberation Sans',sans-serif;letter-spacing:-0.229px;">Shipboard Extension</div>
<div class="a" style="left:1745px;top:115.5px;width:44.5px;height:44.5px;border:1px solid #262626;border-radius:7px"></div>
<svg class="a" style="left:1756px;top:127px" width="22" height="22" viewBox="0 0 24 24" fill="none" stroke="#f0f0f0" stroke-width="2" stroke-linecap="round" stroke-linejoin="round"><path d="M12 3a6 6 0 0 0 9 9 9 9 0 1 1-9-9Z"/></svg>
<div class="a" style="left:1801.5px;top:115.5px;width:44.5px;height:44.5px;border-radius:50%;background:#262626"></div>
<div id="t115" class="t" style="left:1817.00px;top:129.78px;font-size:17.5px;color:#f2f2f2;font-weight:700;font-family:'Liberation Sans',sans-serif;">U</div>
<div class="a" style="left:1355px;top:176px;width:513px;height:1.2px;background:#262626;"></div>
<svg class="a" style="left:1396px;top:213px" width="20" height="19" viewBox="0 0 20 19" fill="none" stroke="#e6e6e6" stroke-width="1.7" stroke-linecap="round" stroke-linejoin="round"><path d="M17 9.5 H3 M9.5 3 L3 9.5 L9.5 16"/></svg>
<div id="t116" class="t" style="left:1440.20px;top:210.83px;font-size:25px;color:#f2f2f2;font-weight:700;font-family:'Liberation Sans',sans-serif;letter-spacing:-0.508px;">Feedback Detail</div>
<div id="t117" class="t" style="left:1383.70px;top:285.14px;font-size:27px;color:#f2f2f2;font-weight:700;font-family:'Liberation Sans',sans-serif;letter-spacing:-0.329px;">Quick-Add Task Shortcut</div>
<div id="t118" class="t" style="left:1383.70px;top:319.24px;font-size:27px;color:#f2f2f2;font-weight:700;font-family:'Liberation Sans',sans-serif;letter-spacing:0.499px;">(Ctrl+Shift+A)</div>
<div class="a" style="left:1776px;top:278.8px;width:63.7px;height:28.6px;border:1px solid #262626;border-radius:15px"></div>
<div id="t119" class="t" style="left:1791.25px;top:286.12px;font-size:13.8px;color:#f2f2f2;font-weight:700;font-family:'Liberation Sans',sans-serif;letter-spacing:0.000px;">IDEA</div>
<div id="t120" class="t" style="left:1383.70px;top:374.78px;font-size:17.5px;color:#8c8c8c;font-family:'Liberation Sans',sans-serif;letter-spacing:-0.577px;">By Anonymous</div>
<div class="a" style="left:1507.5px;top:381px;width:4.5px;height:4.5px;border-radius:50%;background:#8c8c8c"></div>
<div id="t121" class="t" style="left:1525.70px;top:374.78px;font-size:17.5px;color:#8c8c8c;font-family:'Liberation Sans',sans-serif;letter-spacing:-0.140px;">12/6/2025</div>
<div id="t122" class="t" style="left:1383.75px;top:422.15px;font-size:19.6px;color:#e3e3e3;font-family:'Liberation Sans',sans-serif;letter-spacing:0.168px;">I live in my keyboard. A global hotkey to pop open</div>
<div id="t123" class="t" style="left:1383.75px;top:454.65px;font-size:19.6px;color:#e3e3e3;font-family:'Liberation Sans',sans-serif;letter-spacing:0.052px;">the quick-add bar from anywhere would save tons</div>
<div id="t124" class="t" style="left:1383.75px;top:486.40px;font-size:19.6px;color:#e3e3e3;font-family:'Liberation Sans',sans-serif;letter-spacing:0.421px;">of time.</div>
<svg class="a" style="left:1481px;top:446px" width="12" height="26" viewBox="0 0 12 26" fill="none" stroke="#d0d0d0" stroke-width="1.3"><path d="M3 1.5 H9 M6 1.5 V23.5 M3 23.5 H9"/></svg>
<div class="a" style="left:1377.5px;top:546px;width:468px;height:1.2px;background:#202020;"></div>
<div class="a" style="left:1377.5px;top:580.5px;width:468.75px;height:104.5px;border:1px solid #1c1c1c;border-radius:12px;background:#111111"></div>
<div class="a" style="left:1402px;top:605px;width:420px;height:55px;border:1px solid #1c1c1c;border-radius:9px;background:#070707"></div>
<div id="t125" class="t" style="left:1425.50px;top:623.84px;font-size:18.5px;color:#f2f2f2;font-weight:700;font-family:'Liberation Sans',sans-serif;letter-spacing:-0.106px;">Current Status:</div>
<div class="a" style="left:1665.75px;top:617px;width:99.25px;height:31.25px;border-radius:16px;background:#f0f0f0"></div>
<div id="t126" class="t" style="left:1681.25px;top:624.76px;font-size:18px;color:#3a3a3a;font-family:'Liberation Sans',sans-serif;letter-spacing:-0.790px;">Received</div>
<svg class="a" style="left:1776px;top:624px" width="20" height="16" viewBox="0 0 20 16" fill="none" stroke="#8a8a8a" stroke-width="1.6"><path d="M3.5 4.5 L10 11 L16.5 4.5"/></svg>
<div class="a" style="left:1377.5px;top:719px;width:468px;height:1.2px;background:#202020;"></div>
<svg class="a" style="left:1376px;top:756px" width="25" height="24" viewBox="0 0 25 24" fill="none" stroke="#e0e0e0" stroke-width="1.8" stroke-linejoin="round"><path d="M4 3 H21.5 Q22.5 3 22.5 4 V16 Q22.5 17 21.5 17 H8.5 L4 21 V4 Q4 3 5 3 Z"/></svg>
<div id="t127" class="t" style="left:1411.90px;top:758.91px;font-size:19px;color:#f2f2f2;font-weight:700;font-family:'Liberation Sans',sans-serif;letter-spacing:-0.464px;">Discussion (4)</div>
<div class="a" style="left:1378.5px;top:805.4px;width:43px;height:43px;border-radius:50%;background:#242424"></div>
<div id="t128" class="t" style="left:1395.60px;top:820.20px;font-size:16px;color:#f2f2f2;font-weight:700;font-family:'Liberation Sans',sans-serif;">S</div>
<div id="t129" class="t" style="left:1439.40px;top:809.76px;font-size:18px;color:#f2f2f2;font-weight:700;font-family:'Liberation Sans',sans-serif;letter-spacing:0.542px;">Sam</div>
<div id="t130" class="t" style="left:1490.00px;top:812.03px;font-size:15.3px;color:#a0a0a0;font-family:'Liberation Mono',monospace;">12/6/2025</div>
<div id="t131" class="t" style="left:1440.00px;top:848.66px;font-size:19.3px;color:#e3e3e3;font-family:'Liberation Sans',sans-serif;letter-spacing:0.220px;">this is the one feature that would actually get</div>
<div id="t132" class="t" style="left:1440.00px;top:876.66px;font-size:19.3px;color:#e3e3e3;font-family:'Liberation Sans',sans-serif;letter-spacing:0.190px;">me to use this daily. my mouse hand is tired.</div>
<div class="a" style="left:1378.5px;top:934.75px;width:43px;height:43px;border-radius:50%;background:#242424"></div>
<div id="t133" class="t" style="left:1396.50px;top:948.95px;font-size:16px;color:#f2f2f2;font-weight:700;font-family:'Liberation Sans',sans-serif;">J</div>
<div id="t134" class="t" style="left:1439.50px;top:939.26px;font-size:18px;color:#f2f2f2;font-weight:700;font-family:'Liberation Sans',sans-serif;letter-spacing:-0.689px;">Julia</div>
<div id="t135" class="t" style="left:1491.25px;top:942.03px;font-size:15.3px;color:#a0a0a0;font-family:'Liberation Mono',monospace;">12/6/2025</div>
<div id="t136" class="t" style="left:1440.00px;top:977.41px;font-size:19.3px;color:#e3e3e3;font-family:'Liberation Sans',sans-serif;letter-spacing:0.219px;">wait, what about Mac? cmd+shift+a</div>
<div class="a" style="left:1329px;top:1010px;width:568px;height:36px;overflow:hidden">
<div class="a" style="left:83.5px;top:8px;width:1.2px;height:40px;background:#262626;"></div>
<div class="a" style="left:107.0px;top:8.5px;width:43px;height:43px;border-radius:50%;background:#242424"></div>
<div id="t137" class="t" style="left:124.75px;top:22.95px;font-size:16px;color:#f2f2f2;font-weight:700;font-family:'Liberation Sans',sans-serif;">F</div>
<div id="t138" class="t" style="left:168.50px;top:13.51px;font-size:18px;color:#f2f2f2;font-weight:700;font-family:'Liberation Sans',sans-serif;letter-spacing:-0.054px;">Flow Focus</div>
<div id="t139" class="t" style="left:278.00px;top:16.28px;font-size:15.3px;color:#a0a0a0;font-family:'Liberation Mono',monospace;">12/6/2025</div>
</div>
<div class="a" style="left:0px;top:1046px;width:1920px;height:31.5px;background:#181818;"></div>
<div class="a" style="left:0px;top:1046px;width:1920px;height:1px;background:#2b2b2b;"></div>
<div class="a" style="left:0px;top:1077.5px;width:1920px;height:2.5px;background:#0b0b0b;"></div>
<svg class="a" style="left:1878px;top:1052px" width="24" height="22" viewBox="0 0 24 22" fill="none" stroke="#cccccc" stroke-width="1.4"><path d="M6 15.5 V9.5 C6 6 8.5 4 11.5 4 C14.5 4 17 6 17 9.5 V15.5 L18.5 17 H4.5 Z M9.5 18.5 Q11.5 20.5 13.5 18.5"/><circle cx="17.5" cy="4.5" r="3" fill="#cccccc" stroke="#181818" stroke-width="1"/></svg>
<div class="a" style="left:0px;top:1045px;width:332px;height:35px;background:#121212;"></div>
<svg class="a" style="left:0;top:1045px" width="332" height="35" viewBox="0 1045 332 35">
<g fill="none" stroke="#9a9a9a" stroke-width="1.3"><circle cx="11" cy="1055" r="5"/><path d="M5 1060 L17 1050 M8 1053 Q11 1057 15 1054"/></g>
<g fill="#9a9a9a"><circle cx="7.5" cy="1068.5" r="1.2"/><circle cx="11.5" cy="1068.5" r="1.2"/><circle cx="15.5" cy="1068.5" r="1.2"/></g>
<path d="M25 1053.5 H31 L33.5 1050.5 H42 L44.5 1053.5 H51.5 V1072 H25 Z" fill="#ffffff"/>
<circle cx="38.5" cy="1062.5" r="5.3" fill="none" stroke="#333" stroke-width="1.8"/><circle cx="47.5" cy="1056" r="1" fill="#333"/>
<circle cx="76.5" cy="1061.25" r="12" fill="none" stroke="#8a3b36" stroke-width="1.4"/>
<circle cx="76.5" cy="1061.25" r="9.5" fill="#f47f75"/>
<rect x="139" y="1048" width="12" height="18" rx="6" fill="#8d8d8d"/>
<path d="M136 1060 Q136 1069 145 1069 Q154 1069 154 1060 M145 1069 V1073 M139 1073.5 H151" fill="none" stroke="#8d8d8d" stroke-width="1.6"/>
<path d="M171 1057 H176 L184 1050 V1073 L176 1066 H171 Z" fill="#8d8d8d"/>
<circle cx="221.5" cy="1059" r="10.5" fill="none" stroke="#8d8d8d" stroke-width="2.2"/><circle cx="222" cy="1058" r="3" fill="#8d8d8d"/>
<path d="M215 1069 L213 1073 H230 L228 1069" fill="#8d8d8d"/>
<g><circle cx="150.5" cy="1068.3" r="5.3" fill="#c9463d"/><path d="M148.3 1066.1 L152.7 1070.5 M152.7 1066.1 L148.3 1070.5" stroke="#fff" stroke-width="1.3"/></g>
<g><circle cx="194" cy="1061" r="5.3" fill="#c9463d"/><path d="M191.8 1058.8 L196.2 1063.2 M196.2 1058.8 L191.8 1063.2" stroke="#fff" stroke-width="1.3"/></g>
<g><circle cx="228.4" cy="1068.3" r="5.3" fill="#c9463d"/><path d="M226.2 1066.1 L230.6 1070.5 M230.6 1066.1 L226.2 1070.5" stroke="#fff" stroke-width="1.3"/></g>
<path d="M245.3 1046 V1078" stroke="#cfcfcf" stroke-width="1.2" stroke-dasharray="2 2"/>
<path d="M257.5 1068 V1050.5 H277.5 V1053.5" fill="none" stroke="#ffffff" stroke-width="1.6"/>
<rect x="261" y="1054" width="22.5" height="18" fill="#ffffff"/>
<path d="" fill="#ffffff"/>
<circle cx="308" cy="1061" r="4" fill="#121212"/>
</svg>
<div id="t140" class="t" style="left:94.70px;top:1055.54px;font-size:12px;color:#bdbdbd;font-weight:700;font-family:'Liberation Sans',sans-serif;letter-spacing:-0.429px;">00:31</div>
<svg class="a" style="left:0;top:0" width="1920" height="1080"><path d="M317.37 1059.44 L320.93 1059.67 L320.93 1062.33 L317.37 1062.56 L315.73 1066.52 L318.08 1069.21 L316.21 1071.08 L313.52 1068.73 L309.56 1070.37 L309.33 1073.93 L306.67 1073.93 L306.44 1070.37 L302.48 1068.73 L299.79 1071.08 L297.92 1069.21 L300.27 1066.52 L298.63 1062.56 L295.07 1062.33 L295.07 1059.67 L298.63 1059.44 L300.27 1055.48 L297.92 1052.79 L299.79 1050.92 L302.48 1053.27 L306.44 1051.63 L306.67 1048.07 L309.33 1048.07 L309.56 1051.63 L313.52 1053.27 L316.21 1050.92 L318.08 1052.79 L315.73 1055.48 Z" fill="#ffffff"/><circle cx="308" cy="1061" r="4" fill="#121212"/></svg>
</body></html>
